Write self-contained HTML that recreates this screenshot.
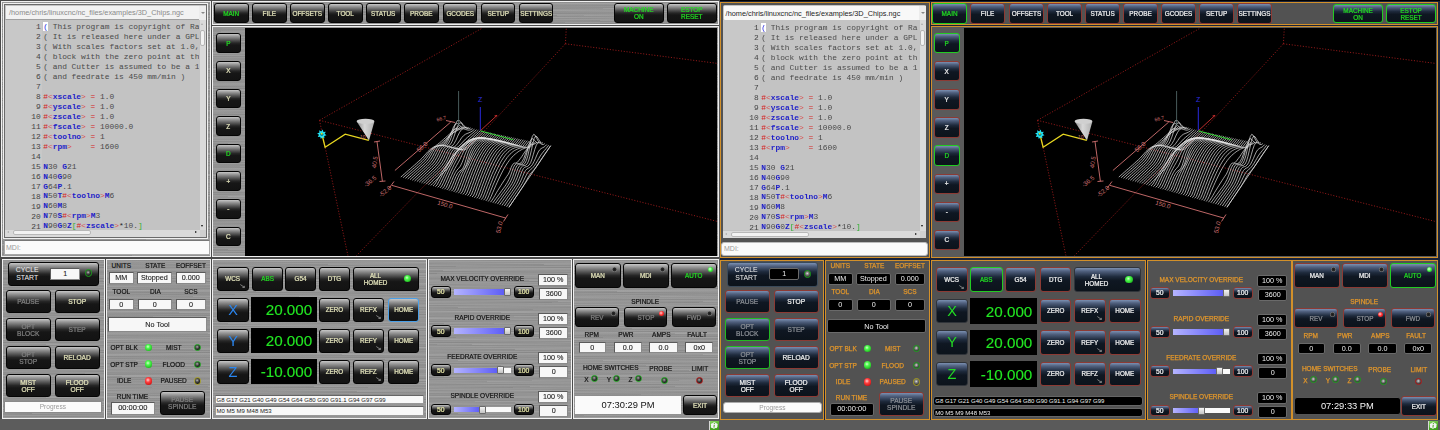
<!DOCTYPE html><html><head><meta charset="utf-8"><style>
html,body{margin:0;padding:0;}
body{width:1440px;height:430px;overflow:hidden;position:relative;background:#000;font-family:"Liberation Sans",sans-serif;}
.a{position:absolute;box-sizing:border-box;}
.t{white-space:nowrap;display:flex;align-items:center;line-height:1.15;}
.metal{background-color:#979797;background-image:repeating-linear-gradient(179.6deg,rgba(255,255,255,0.09) 0px,rgba(0,0,0,0.06) 1px,rgba(255,255,255,0.03) 2px,rgba(0,0,0,0.07) 3.2px,rgba(255,255,255,0.07) 4.1px,rgba(0,0,0,0.03) 5.3px),repeating-linear-gradient(180.3deg,rgba(0,0,0,0.05) 0px,rgba(255,255,255,0.06) 2.3px,rgba(0,0,0,0.04) 4.7px,rgba(255,255,255,0.02) 7.1px);}
.bL{border:1px solid #050505;border-radius:3px;background:linear-gradient(180deg,#c8c8c8 0%,#9c9c9c 12%,#5c5c5c 32%,#262626 50%,#161616 62%,#131313 100%);color:#e4e4bc;font-weight:normal;-webkit-text-stroke:0.22px;}
.bR{border:1px solid #8c3a34;border-radius:3px;background:linear-gradient(180deg,#7b90b2 0%,#50607e 14%,#1e2a3c 38%,#0f1722 55%,#0c131b 100%);color:#f2f2f2;font-weight:normal;-webkit-text-stroke:0.22px;}
.bt{will-change:transform;position:absolute;left:0;right:0;top:calc(50% + 0.6px);transform:translateY(-50%);text-align:center;line-height:1.12;white-space:nowrap;}
.sled{position:absolute;right:2.5px;top:2.5px;width:5px;height:5px;border-radius:50%;}
.arr{position:absolute;right:2.5px;bottom:2px;}
.box{background:#f7f7f7;border:1px solid #8a8a8a;border-top-color:#5a5a5a;border-left-color:#5a5a5a;color:#1a1a1a;-webkit-text-stroke:0.1px #1a1a1a;font-size:7.2px;text-align:center;}
.boxR{background:#000;border:1px solid #6a6a6a;border-radius:2px;color:#f0f0f0;font-size:7.2px;text-align:center;}
.lbl{font-size:6.5px;color:#141414;font-weight:normal;-webkit-text-stroke:0.2px #141414;}
.lblR{font-size:6.5px;color:#e0962c;font-weight:normal;-webkit-text-stroke:0.25px #e0962c;}
.code{font-family:"Liberation Mono",monospace;font-size:7.9px;line-height:9.97px;white-space:pre;}
.led{position:absolute;border-radius:50%;box-sizing:border-box;}
</style></head><body>

<div class="a " style="left:0.00px;top:0.00px;width:720.00px;height:430.00px;background:#5c5c5c;"></div>
<div class="a " style="left:0.00px;top:0.00px;width:719.50px;height:419.00px;background:#4a4a4a;"></div>
<div class="a metal" style="left:1.00px;top:1.00px;width:209.80px;height:255.80px;border:1px solid #f0f0f0;"></div>
<div class="a " style="left:3.00px;top:3.00px;width:205.30px;height:235.50px;border:1px solid #f0f0f0;background:#6a6a6a;"></div>
<div class="a metal" style="left:212.30px;top:1.00px;width:506.50px;height:23.60px;border:1px solid #f0f0f0;"></div>
<div class="a metal" style="left:212.30px;top:26.20px;width:506.50px;height:230.80px;border:1px solid #f0f0f0;"></div>
<div class="a metal" style="left:1.50px;top:259.20px;width:103.30px;height:159.50px;border:1px solid #f0f0f0;"></div>
<div class="a metal" style="left:105.80px;top:259.20px;width:105.00px;height:159.50px;border:1px solid #f0f0f0;"></div>
<div class="a metal" style="left:212.30px;top:259.20px;width:214.50px;height:159.50px;border:1px solid #f0f0f0;"></div>
<div class="a metal" style="left:427.60px;top:259.20px;width:144.30px;height:159.50px;border:1px solid #f0f0f0;"></div>
<div class="a metal" style="left:572.80px;top:259.20px;width:146.00px;height:159.50px;border:1px solid #f0f0f0;"></div>
<div class="a " style="left:4.80px;top:4.80px;width:201.20px;height:15.20px;background:#f2f2f2;border:1px solid #c4c4c4;border-bottom-color:#a0a0a0;"></div>
<div class="a t " style="left:9.00px;top:-1.70px;width:400px;height:30px;justify-content:flex-start;font-size:7.33px;color:#8a8a8a;">/home/chris/linuxcnc/nc_files/examples/3D_Chips.ngc</div>
<div class="a " style="left:198.50px;top:5.50px;width:7.00px;height:14.00px;background:#ececec;"></div>
<div class="a" style="left:200.80px;top:11.5px;width:0;height:0;border-left:2.2px solid transparent;border-right:2.2px solid transparent;border-top:2.6px solid #888;"></div>
<div class="a " style="left:5.00px;top:20.00px;width:201.00px;height:216.50px;background:#c3c3c3;"></div>
<div class="a " style="left:5.00px;top:20.00px;width:37.30px;height:209.50px;background:#c8c8c8;"></div>
<div class="a t " style="left:-259.20px;top:12.00px;width:300px;height:30px;justify-content:flex-end;text-align:right;font-family:'Liberation Mono',monospace;font-size:7.9px;color:#444;">1</div>
<div class="a code" style="left:43.20px;top:22.00px;width:156.30px;height:11px;overflow:hidden;"><span style="color:#1a1adc;background:#fff;">(</span><span style="color:#4a4a4a;"> This program is copyright of Ra</span></div>
<div class="a t " style="left:-259.20px;top:21.97px;width:300px;height:30px;justify-content:flex-end;text-align:right;font-family:'Liberation Mono',monospace;font-size:7.9px;color:#444;">2</div>
<div class="a code" style="left:43.20px;top:31.97px;width:156.30px;height:11px;overflow:hidden;"><span style="color:#4a4a4a;">( It is released here under a GPL</span></div>
<div class="a t " style="left:-259.20px;top:31.94px;width:300px;height:30px;justify-content:flex-end;text-align:right;font-family:'Liberation Mono',monospace;font-size:7.9px;color:#444;">3</div>
<div class="a code" style="left:43.20px;top:41.94px;width:156.30px;height:11px;overflow:hidden;"><span style="color:#4a4a4a;">( With scales factors set at 1.0,</span></div>
<div class="a t " style="left:-259.20px;top:41.91px;width:300px;height:30px;justify-content:flex-end;text-align:right;font-family:'Liberation Mono',monospace;font-size:7.9px;color:#444;">4</div>
<div class="a code" style="left:43.20px;top:51.91px;width:156.30px;height:11px;overflow:hidden;"><span style="color:#4a4a4a;">( block with the zero point at th</span></div>
<div class="a t " style="left:-259.20px;top:51.88px;width:300px;height:30px;justify-content:flex-end;text-align:right;font-family:'Liberation Mono',monospace;font-size:7.9px;color:#444;">5</div>
<div class="a code" style="left:43.20px;top:61.88px;width:156.30px;height:11px;overflow:hidden;"><span style="color:#4a4a4a;">( and Cutter is assumed to be a 1</span></div>
<div class="a t " style="left:-259.20px;top:61.85px;width:300px;height:30px;justify-content:flex-end;text-align:right;font-family:'Liberation Mono',monospace;font-size:7.9px;color:#444;">6</div>
<div class="a code" style="left:43.20px;top:71.85px;width:156.30px;height:11px;overflow:hidden;"><span style="color:#4a4a4a;">( and feedrate is 450 mm/min )</span></div>
<div class="a t " style="left:-259.20px;top:71.82px;width:300px;height:30px;justify-content:flex-end;text-align:right;font-family:'Liberation Mono',monospace;font-size:7.9px;color:#444;">7</div>
<div class="a t " style="left:-259.20px;top:81.79px;width:300px;height:30px;justify-content:flex-end;text-align:right;font-family:'Liberation Mono',monospace;font-size:7.9px;color:#444;">8</div>
<div class="a code" style="left:43.20px;top:91.79px;width:156.30px;height:11px;overflow:hidden;"><span style="color:#d42020;">#</span><span style="color:#d85050;">&lt;</span><span style="color:#1e1ec8;font-weight:bold;">xscale</span><span style="color:#d85050;">&gt;</span><span style="color:#4a4a4a;"> </span><span style="color:#d42020;">=</span><span style="color:#4a4a4a;"> 1.0</span></div>
<div class="a t " style="left:-259.20px;top:91.76px;width:300px;height:30px;justify-content:flex-end;text-align:right;font-family:'Liberation Mono',monospace;font-size:7.9px;color:#444;">9</div>
<div class="a code" style="left:43.20px;top:101.76px;width:156.30px;height:11px;overflow:hidden;"><span style="color:#d42020;">#</span><span style="color:#d85050;">&lt;</span><span style="color:#1e1ec8;font-weight:bold;">yscale</span><span style="color:#d85050;">&gt;</span><span style="color:#4a4a4a;"> </span><span style="color:#d42020;">=</span><span style="color:#4a4a4a;"> 1.0</span></div>
<div class="a t " style="left:-259.20px;top:101.73px;width:300px;height:30px;justify-content:flex-end;text-align:right;font-family:'Liberation Mono',monospace;font-size:7.9px;color:#444;">10</div>
<div class="a code" style="left:43.20px;top:111.73px;width:156.30px;height:11px;overflow:hidden;"><span style="color:#d42020;">#</span><span style="color:#d85050;">&lt;</span><span style="color:#1e1ec8;font-weight:bold;">zscale</span><span style="color:#d85050;">&gt;</span><span style="color:#4a4a4a;"> </span><span style="color:#d42020;">=</span><span style="color:#4a4a4a;"> 1.0</span></div>
<div class="a t " style="left:-259.20px;top:111.70px;width:300px;height:30px;justify-content:flex-end;text-align:right;font-family:'Liberation Mono',monospace;font-size:7.9px;color:#444;">11</div>
<div class="a code" style="left:43.20px;top:121.70px;width:156.30px;height:11px;overflow:hidden;"><span style="color:#d42020;">#</span><span style="color:#d85050;">&lt;</span><span style="color:#1e1ec8;font-weight:bold;">fscale</span><span style="color:#d85050;">&gt;</span><span style="color:#4a4a4a;"> </span><span style="color:#d42020;">=</span><span style="color:#4a4a4a;"> 10000.0</span></div>
<div class="a t " style="left:-259.20px;top:121.67px;width:300px;height:30px;justify-content:flex-end;text-align:right;font-family:'Liberation Mono',monospace;font-size:7.9px;color:#444;">12</div>
<div class="a code" style="left:43.20px;top:131.67px;width:156.30px;height:11px;overflow:hidden;"><span style="color:#d42020;">#</span><span style="color:#d85050;">&lt;</span><span style="color:#1e1ec8;font-weight:bold;">toolno</span><span style="color:#d85050;">&gt;</span><span style="color:#4a4a4a;"> </span><span style="color:#d42020;">=</span><span style="color:#4a4a4a;"> 1</span></div>
<div class="a t " style="left:-259.20px;top:131.64px;width:300px;height:30px;justify-content:flex-end;text-align:right;font-family:'Liberation Mono',monospace;font-size:7.9px;color:#444;">13</div>
<div class="a code" style="left:43.20px;top:141.64px;width:156.30px;height:11px;overflow:hidden;"><span style="color:#d42020;">#</span><span style="color:#d85050;">&lt;</span><span style="color:#1e1ec8;font-weight:bold;">rpm</span><span style="color:#d85050;">&gt;</span><span style="color:#4a4a4a;">    </span><span style="color:#d42020;">=</span><span style="color:#4a4a4a;"> 1600</span></div>
<div class="a t " style="left:-259.20px;top:141.61px;width:300px;height:30px;justify-content:flex-end;text-align:right;font-family:'Liberation Mono',monospace;font-size:7.9px;color:#444;">14</div>
<div class="a t " style="left:-259.20px;top:151.58px;width:300px;height:30px;justify-content:flex-end;text-align:right;font-family:'Liberation Mono',monospace;font-size:7.9px;color:#444;">15</div>
<div class="a code" style="left:43.20px;top:161.58px;width:156.30px;height:11px;overflow:hidden;"><span style="color:#1e1ec8;font-weight:bold;">N</span><span style="color:#4a4a4a;">30 </span><span style="color:#1e1ec8;font-weight:bold;">G</span><span style="color:#4a4a4a;">21</span></div>
<div class="a t " style="left:-259.20px;top:161.55px;width:300px;height:30px;justify-content:flex-end;text-align:right;font-family:'Liberation Mono',monospace;font-size:7.9px;color:#444;">16</div>
<div class="a code" style="left:43.20px;top:171.55px;width:156.30px;height:11px;overflow:hidden;"><span style="color:#1e1ec8;font-weight:bold;">N</span><span style="color:#4a4a4a;">40</span><span style="color:#1e1ec8;font-weight:bold;">G</span><span style="color:#4a4a4a;">90</span></div>
<div class="a t " style="left:-259.20px;top:171.52px;width:300px;height:30px;justify-content:flex-end;text-align:right;font-family:'Liberation Mono',monospace;font-size:7.9px;color:#444;">17</div>
<div class="a code" style="left:43.20px;top:181.52px;width:156.30px;height:11px;overflow:hidden;"><span style="color:#1e1ec8;font-weight:bold;">G</span><span style="color:#4a4a4a;">64</span><span style="color:#1e1ec8;font-weight:bold;">P</span><span style="color:#4a4a4a;">.1</span></div>
<div class="a t " style="left:-259.20px;top:181.49px;width:300px;height:30px;justify-content:flex-end;text-align:right;font-family:'Liberation Mono',monospace;font-size:7.9px;color:#444;">18</div>
<div class="a code" style="left:43.20px;top:191.49px;width:156.30px;height:11px;overflow:hidden;"><span style="color:#1e1ec8;font-weight:bold;">N</span><span style="color:#4a4a4a;">50</span><span style="color:#1e1ec8;font-weight:bold;">T</span><span style="color:#d42020;">#</span><span style="color:#d85050;">&lt;</span><span style="color:#1e1ec8;font-weight:bold;">toolno</span><span style="color:#d85050;">&gt;</span><span style="color:#1e1ec8;font-weight:bold;">M</span><span style="color:#4a4a4a;">6</span></div>
<div class="a t " style="left:-259.20px;top:191.46px;width:300px;height:30px;justify-content:flex-end;text-align:right;font-family:'Liberation Mono',monospace;font-size:7.9px;color:#444;">19</div>
<div class="a code" style="left:43.20px;top:201.46px;width:156.30px;height:11px;overflow:hidden;"><span style="color:#1e1ec8;font-weight:bold;">N</span><span style="color:#4a4a4a;">60</span><span style="color:#1e1ec8;font-weight:bold;">M</span><span style="color:#4a4a4a;">8</span></div>
<div class="a t " style="left:-259.20px;top:201.43px;width:300px;height:30px;justify-content:flex-end;text-align:right;font-family:'Liberation Mono',monospace;font-size:7.9px;color:#444;">20</div>
<div class="a code" style="left:43.20px;top:211.43px;width:156.30px;height:11px;overflow:hidden;"><span style="color:#1e1ec8;font-weight:bold;">N</span><span style="color:#4a4a4a;">70</span><span style="color:#1e1ec8;font-weight:bold;">S</span><span style="color:#d42020;">#</span><span style="color:#d85050;">&lt;</span><span style="color:#1e1ec8;font-weight:bold;">rpm</span><span style="color:#d85050;">&gt;</span><span style="color:#1e1ec8;font-weight:bold;">M</span><span style="color:#4a4a4a;">3</span></div>
<div class="a t " style="left:-259.20px;top:211.40px;width:300px;height:30px;justify-content:flex-end;text-align:right;font-family:'Liberation Mono',monospace;font-size:7.9px;color:#444;">21</div>
<div class="a code" style="left:43.20px;top:221.40px;width:156.30px;height:11px;overflow:hidden;"><span style="color:#1e1ec8;font-weight:bold;">N</span><span style="color:#4a4a4a;">90</span><span style="color:#1e1ec8;font-weight:bold;">G</span><span style="color:#4a4a4a;">0</span><span style="color:#1e1ec8;font-weight:bold;">Z</span><span style="color:#30b030;">[</span><span style="color:#d42020;">#</span><span style="color:#d85050;">&lt;</span><span style="color:#1e1ec8;font-weight:bold;">zscale</span><span style="color:#d85050;">&gt;</span><span style="color:#222;">*</span><span style="color:#4a4a4a;">10.</span><span style="color:#30b030;">]</span></div>
<div class="a " style="left:199.50px;top:20.00px;width:6.50px;height:209.50px;background:#dadada;"></div>
<div class="a " style="left:200.30px;top:30.00px;width:4.90px;height:15.50px;background:#f2f2f2;border:1px solid #b4b4b4;border-radius:2px;"></div>
<div class="a" style="left:201.00px;top:22.5px;width:0;height:0;border-left:1.8px solid transparent;border-right:1.8px solid transparent;border-bottom:2.2px solid #aaa;"></div>
<div class="a" style="left:201.00px;top:225px;width:0;height:0;border-left:1.8px solid transparent;border-right:1.8px solid transparent;border-top:2.4px solid #111;"></div>
<div class="a " style="left:5.00px;top:229.50px;width:194.50px;height:7.00px;background:#dadada;"></div>
<div class="a " style="left:12.50px;top:230.30px;width:78.50px;height:5.20px;background:#f2f2f2;border:1px solid #b8b8b8;border-radius:2px;"></div>
<div class="a" style="left:7.00px;top:231.2px;width:0;height:0;border-top:1.8px solid transparent;border-bottom:1.8px solid transparent;border-right:2.2px solid #aaa;"></div>
<div class="a" style="left:195.00px;top:231.2px;width:0;height:0;border-top:1.8px solid transparent;border-bottom:1.8px solid transparent;border-left:2.6px solid #111;"></div>
<div class="a " style="left:199.50px;top:229.50px;width:6.50px;height:7.00px;background:#cfcfcf;"></div>
<div class="a " style="left:3.50px;top:240.40px;width:206.00px;height:15.00px;background:#fbfbfb;border:1px solid #a8a8a8;border-top-color:#777;"></div>
<div class="a t " style="left:6.00px;top:233.30px;width:400px;height:30px;justify-content:flex-start;font-size:7px;color:#9a9a9a;">MDI:</div>
<div class="a bL" style="left:214.20px;top:3.30px;width:34.50px;height:19.30px;color:#22dd22;font-size:6.4px;"><div class="bt">MAIN</div></div>
<div class="a bL" style="left:252.25px;top:3.30px;width:34.50px;height:19.30px;font-size:6.4px;"><div class="bt">FILE</div></div>
<div class="a bL" style="left:290.30px;top:3.30px;width:34.50px;height:19.30px;font-size:6.4px;"><div class="bt">OFFSETS</div></div>
<div class="a bL" style="left:328.35px;top:3.30px;width:34.50px;height:19.30px;font-size:6.4px;"><div class="bt">TOOL</div></div>
<div class="a bL" style="left:366.40px;top:3.30px;width:34.50px;height:19.30px;font-size:6.4px;"><div class="bt">STATUS</div></div>
<div class="a bL" style="left:404.45px;top:3.30px;width:34.50px;height:19.30px;font-size:6.4px;"><div class="bt">PROBE</div></div>
<div class="a bL" style="left:442.50px;top:3.30px;width:34.50px;height:19.30px;font-size:6.4px;"><div class="bt">GCODES</div></div>
<div class="a bL" style="left:480.55px;top:3.30px;width:34.50px;height:19.30px;font-size:6.4px;"><div class="bt">SETUP</div></div>
<div class="a bL" style="left:518.60px;top:3.30px;width:34.50px;height:19.30px;font-size:6.4px;"><div class="bt">SETTINGS</div></div>
<div class="a bL" style="left:614.30px;top:3.10px;width:49.50px;height:19.60px;color:#22dd22;font-size:6.4px;"><div class="bt">MACHINE<br>ON</div></div>
<div class="a bL" style="left:667.20px;top:3.10px;width:49.50px;height:19.60px;color:#22dd22;font-size:6.4px;"><div class="bt">ESTOP<br>RESET</div></div>
<div class="a " style="left:245.00px;top:27.50px;width:472.30px;height:228.00px;background:#000;"></div>
<svg class="a" style="left:245.00px;top:27.5px;" width="472.3" height="228" viewBox="245 27.5 472.3 228"><line x1="319.5" y1="119.8" x2="482.4" y2="27.5" stroke="#a01c1c" stroke-width="0.9" stroke-dasharray="1.1 1.7" fill="none"/><line x1="319.5" y1="119.8" x2="716.7" y2="220.8" stroke="#a01c1c" stroke-width="0.9" stroke-dasharray="1.1 1.7" fill="none"/><line x1="319.5" y1="119.8" x2="347.9" y2="255" stroke="#a01c1c" stroke-width="0.9" stroke-dasharray="1.1 1.7" fill="none"/><line x1="565.4" y1="43.3" x2="566.3" y2="27.5" stroke="#a01c1c" stroke-width="0.9" stroke-dasharray="1.1 1.7" fill="none"/><line x1="565.4" y1="43.3" x2="716.7" y2="62.8" stroke="#a01c1c" stroke-width="0.9" stroke-dasharray="1.1 1.7" fill="none"/><polyline points="565.4,43.3 482.3,132.8 424.6,184.9 356.6,255" stroke="#a01c1c" stroke-width="0.9" stroke-dasharray="1.1 1.7" fill="none"/><polyline points="400.8,176.6 402.7,174.9 404.7,173.2 406.6,171.5 408.5,169.8 410.5,168.1 412.4,166.4 414.4,164.7 416.3,163.0 418.2,161.2 420.2,159.5 422.1,157.6 424.0,155.5 426.0,153.3 427.9,151.1 429.9,149.2 431.8,147.7 433.7,146.5 435.7,145.3 437.6,143.9 439.5,142.4 441.5,140.7 443.4,139.0 445.3,137.3 447.3,135.6 449.2,133.9 451.2,132.2 453.1,130.5 455.0,128.9 457.0,127.2 458.9,125.5" stroke="#e6e6e6" stroke-width="0.7" fill="none"/><polyline points="403.1,177.2 405.0,175.5 407.0,173.8 408.9,172.1 410.8,170.4 412.7,168.7 414.7,167.0 416.6,165.3 418.5,163.5 420.4,161.8 422.4,159.9 424.3,157.9 426.2,155.5 428.1,152.9 430.1,150.3 432.0,148.3 433.9,146.9 435.8,146.0 437.8,145.2 439.7,144.1 441.6,142.6 443.5,140.9 445.5,139.1 447.4,137.2 449.3,135.4 451.2,133.8 453.2,132.2 455.1,130.7 457.0,129.2 458.9,127.6 460.9,125.9" stroke="#e6e6e6" stroke-width="0.7" fill="none"/><polyline points="405.4,177.9 407.3,176.2 409.2,174.4 411.1,172.7 413.1,171.0 415.0,169.3 416.9,167.6 418.8,165.9 420.7,164.1 422.6,162.3 424.5,160.4 426.4,158.1 428.4,155.4 430.3,152.4 432.2,149.4 434.1,147.1 436.0,145.9 437.9,145.4 439.8,145.0 441.8,144.1 443.7,142.5 445.6,140.4 447.5,138.0 449.4,135.7 451.3,133.7 453.2,132.3 455.2,131.2 457.1,130.2 459.0,129.1 460.9,127.8 462.8,126.2" stroke="#e6e6e6" stroke-width="0.7" fill="none"/><polyline points="407.7,178.5 409.6,176.8 411.5,175.1 413.4,173.4 415.3,171.6 417.2,169.9 419.1,168.2 421.0,166.4 422.9,164.7 424.8,162.9 426.7,160.9 428.6,158.5 430.5,155.5 432.4,152.0 434.3,148.7 436.2,146.3 438.1,145.2 440.0,145.0 441.9,144.8 443.8,143.9 445.7,141.9 447.6,138.8 449.5,135.2 451.4,131.8 453.3,129.4 455.2,128.4 457.2,128.3 459.1,128.6 461.0,128.4 462.9,127.7 464.8,126.5" stroke="#e6e6e6" stroke-width="0.7" fill="none"/><polyline points="410.0,179.2 411.9,177.4 413.8,175.7 415.7,174.0 417.6,172.2 419.5,170.5 421.3,168.8 423.2,167.0 425.1,165.3 427.0,163.4 428.9,161.4 430.8,158.9 432.7,155.7 434.6,152.0 436.5,148.5 438.4,146.0 440.2,145.0 442.1,144.9 444.0,144.8 445.9,143.6 447.8,140.8 449.7,136.5 451.6,131.3 453.5,126.5 455.4,123.5 457.3,123.0 459.2,124.4 461.0,126.2 462.9,127.4 464.8,127.5 466.7,126.7" stroke="#e6e6e6" stroke-width="0.7" fill="none"/><polyline points="412.3,179.8 414.2,178.1 416.1,176.3 417.9,174.6 419.8,172.9 421.7,171.1 423.6,169.4 425.5,167.6 427.3,165.9 429.2,164.0 431.1,161.9 433.0,159.4 434.8,156.1 436.7,152.3 438.6,148.6 440.5,146.1 442.4,145.1 444.2,145.1 446.1,145.0 448.0,143.6 449.9,140.4 451.8,135.3 453.6,129.1 455.5,123.4 457.4,120.1 459.3,120.0 461.2,122.2 463.0,125.0 464.9,127.0 466.8,127.5 468.7,126.9" stroke="#e6e6e6" stroke-width="0.7" fill="none"/><polyline points="414.6,180.5 416.5,178.7 418.3,177.0 420.2,175.2 422.1,173.5 423.9,171.7 425.8,170.0 427.7,168.2 429.5,166.4 431.4,164.6 433.3,162.5 435.1,159.9 437.0,156.6 438.9,152.7 440.7,149.0 442.6,146.4 444.5,145.4 446.3,145.5 448.2,145.5 450.1,144.3 451.9,141.4 453.8,136.7 455.7,131.0 457.5,125.7 459.4,122.6 461.3,122.3 463.1,124.0 465.0,126.3 466.9,127.9 468.8,128.2 470.6,127.4" stroke="#e6e6e6" stroke-width="0.7" fill="none"/><polyline points="416.9,181.1 418.8,179.3 420.6,177.6 422.5,175.8 424.3,174.1 426.2,172.3 428.0,170.6 429.9,168.8 431.7,167.0 433.6,165.2 435.5,163.1 437.3,160.4 439.2,157.1 441.0,153.2 442.9,149.4 444.7,146.8 446.6,145.9 448.4,146.1 450.3,146.2 452.2,145.4 454.0,143.2 455.9,139.8 457.7,135.6 459.6,131.8 461.4,129.2 463.3,128.3 465.1,128.7 467.0,129.4 468.9,129.7 470.7,129.2 472.6,128.1" stroke="#e6e6e6" stroke-width="0.7" fill="none"/><polyline points="419.2,181.7 421.0,180.0 422.9,178.2 424.7,176.5 426.6,174.7 428.4,172.9 430.3,171.2 432.1,169.4 434.0,167.6 435.8,165.7 437.6,163.6 439.5,161.0 441.3,157.7 443.2,153.7 445.0,149.9 446.9,147.3 448.7,146.4 450.6,146.6 452.4,146.9 454.2,146.5 456.1,145.0 457.9,142.7 459.8,140.0 461.6,137.3 463.5,135.2 465.3,133.8 467.1,133.0 469.0,132.3 470.8,131.4 472.7,130.2 474.5,128.7" stroke="#e6e6e6" stroke-width="0.7" fill="none"/><polyline points="421.5,182.4 423.3,180.6 425.2,178.8 427.0,177.1 428.8,175.3 430.7,173.5 432.5,171.8 434.3,170.0 436.2,168.2 438.0,166.3 439.8,164.2 441.7,161.6 443.5,158.2 445.3,154.2 447.2,150.5 449.0,147.8 450.8,146.9 452.7,147.2 454.5,147.5 456.3,147.3 458.2,146.2 460.0,144.5 461.8,142.5 463.7,140.5 465.5,138.6 467.3,137.0 469.1,135.5 471.0,134.0 472.8,132.5 474.6,130.9 476.5,129.2" stroke="#e6e6e6" stroke-width="0.7" fill="none"/><polyline points="423.8,183.0 425.6,181.2 427.4,179.5 429.3,177.7 431.1,175.9 432.9,174.1 434.7,172.4 436.5,170.6 438.4,168.8 440.2,166.9 442.0,164.8 443.8,162.1 445.7,158.8 447.5,154.8 449.3,151.0 451.1,148.4 452.9,147.4 454.8,147.7 456.6,148.1 458.4,147.9 460.2,146.9 462.0,145.4 463.9,143.7 465.7,141.9 467.5,140.1 469.3,138.3 471.1,136.6 473.0,134.9 474.8,133.2 476.6,131.4 478.4,129.7" stroke="#e6e6e6" stroke-width="0.7" fill="none"/><polyline points="426.1,183.7 427.9,181.9 429.7,180.1 431.5,178.3 433.3,176.5 435.1,174.7 437.0,173.0 438.8,171.2 440.6,169.4 442.4,167.5 444.2,165.3 446.0,162.7 447.8,159.3 449.6,155.3 451.4,151.5 453.2,148.9 455.1,147.9 456.9,148.2 458.7,148.6 460.5,148.4 462.3,147.5 464.1,146.0 465.9,144.3 467.7,142.6 469.5,140.8 471.3,139.0 473.1,137.2 475.0,135.4 476.8,133.7 478.6,131.9 480.4,130.1" stroke="#e6e6e6" stroke-width="0.7" fill="none"/><polyline points="428.4,184.3 430.2,182.5 432.0,180.7 433.8,178.9 435.6,177.1 437.4,175.3 439.2,173.6 441.0,171.8 442.8,169.9 444.6,168.0 446.4,165.9 448.2,163.2 450.0,159.9 451.8,155.9 453.6,152.1 455.4,149.4 457.2,148.5 459.0,148.7 460.8,149.1 462.6,148.9 464.4,148.0 466.2,146.5 468.0,144.8 469.8,143.1 471.6,141.3 473.3,139.5 475.1,137.7 476.9,135.9 478.7,134.1 480.5,132.3 482.3,130.5" stroke="#e6e6e6" stroke-width="0.7" fill="none"/><polyline points="430.7,185.0 432.5,183.2 434.3,181.4 436.1,179.6 437.8,177.8 439.6,176.0 441.4,174.2 443.2,172.3 445.0,170.5 446.8,168.6 448.6,166.5 450.4,163.8 452.1,160.4 453.9,156.4 455.7,152.6 457.5,150.0 459.3,149.0 461.1,149.2 462.9,149.6 464.6,149.4 466.4,148.5 468.2,147.0 470.0,145.3 471.8,143.5 473.6,141.7 475.4,139.9 477.1,138.1 478.9,136.3 480.7,134.5 482.5,132.7 484.3,130.9" stroke="#e6e6e6" stroke-width="0.7" fill="none"/><polyline points="433.0,185.6 434.8,183.8 436.5,181.0 438.3,177.9 440.1,174.9 441.9,172.0 443.6,169.1 445.4,166.3 447.2,163.6 449.0,161.0 450.7,158.5 452.5,156.2 454.3,154.0 456.1,151.9 457.8,150.0 459.6,148.3 461.4,146.7 463.2,145.2 464.9,143.9 466.7,142.7 468.5,141.7 470.3,140.8 472.0,139.9 473.8,139.2 475.6,138.5 477.4,137.9 479.1,137.3 480.9,136.8 482.7,135.0 484.5,133.2 486.2,131.4" stroke="#e6e6e6" stroke-width="0.7" fill="none"/><polyline points="435.3,186.2 437.1,184.4 438.8,181.2 440.6,177.7 442.4,174.3 444.1,170.9 445.9,167.6 447.6,164.4 449.4,161.3 451.2,158.4 452.9,155.7 454.7,153.1 456.5,150.8 458.2,148.7 460.0,146.7 461.7,145.0 463.5,143.5 465.3,142.1 467.0,141.0 468.8,140.1 470.6,139.3 472.3,138.7 474.1,138.2 475.9,137.9 477.6,137.6 479.4,137.5 481.1,137.3 482.9,137.2 484.7,135.4 486.4,133.6 488.2,131.8" stroke="#e6e6e6" stroke-width="0.7" fill="none"/><polyline points="437.6,186.9 439.4,185.1 441.1,181.7 442.9,177.9 444.6,174.2 446.4,170.6 448.1,167.1 449.9,163.7 451.6,160.5 453.4,157.5 455.1,154.6 456.9,151.9 458.6,149.5 460.4,147.3 462.1,145.3 463.9,143.6 465.6,142.1 467.4,140.9 469.1,139.8 470.9,139.0 472.6,138.4 474.4,137.9 476.1,137.6 477.9,137.5 479.6,137.4 481.4,137.5 483.1,137.6 484.9,137.7 486.6,135.9 488.4,134.0 490.2,132.2" stroke="#e6e6e6" stroke-width="0.7" fill="none"/><polyline points="439.9,187.5 441.6,185.7 443.4,182.2 445.1,178.3 446.9,174.4 448.6,170.7 450.3,167.0 452.1,163.5 453.8,160.2 455.6,157.0 457.3,154.1 459.0,151.3 460.8,148.8 462.5,146.6 464.3,144.6 466.0,142.9 467.7,141.4 469.5,140.2 471.2,139.2 473.0,138.4 474.7,137.9 476.4,137.6 478.2,137.4 479.9,137.3 481.7,137.4 483.4,137.6 485.1,137.8 486.9,138.1 488.6,136.3 490.4,134.5 492.1,132.6" stroke="#e6e6e6" stroke-width="0.7" fill="none"/><polyline points="442.2,188.2 443.9,186.3 445.7,182.7 447.4,178.7 449.1,174.7 450.8,170.9 452.6,167.3 454.3,163.8 456.0,160.5 457.8,157.2 459.5,154.1 461.2,151.1 462.9,148.5 464.7,146.2 466.4,144.2 468.1,142.5 469.9,141.0 471.6,139.8 473.3,138.9 475.0,138.2 476.8,137.7 478.5,137.4 480.2,137.3 482.0,137.4 483.7,137.6 485.4,137.8 487.1,138.2 488.9,138.6 490.6,136.7 492.3,134.9 494.1,133.0" stroke="#e6e6e6" stroke-width="0.7" fill="none"/><polyline points="444.5,188.8 446.2,187.0 447.9,183.3 449.7,179.2 451.4,175.2 453.1,171.4 454.8,168.1 456.5,165.1 458.2,162.2 460.0,158.8 461.7,155.1 463.4,151.5 465.1,148.5 466.8,146.1 468.5,144.0 470.3,142.3 472.0,140.8 473.7,139.6 475.4,138.7 477.1,138.1 478.8,137.6 480.6,137.4 482.3,137.4 484.0,137.5 485.7,137.8 487.4,138.1 489.1,138.5 490.9,139.0 492.6,137.2 494.3,135.3 496.0,133.5" stroke="#e6e6e6" stroke-width="0.7" fill="none"/><polyline points="446.8,189.5 448.5,187.6 450.2,183.8 451.9,179.7 453.6,175.7 455.3,172.2 457.0,169.6 458.7,167.7 460.4,165.6 462.1,162.0 463.9,157.3 465.6,152.6 467.3,148.9 469.0,146.1 470.7,144.0 472.4,142.2 474.1,140.8 475.8,139.6 477.5,138.7 479.2,138.1 480.9,137.7 482.6,137.5 484.3,137.5 486.0,137.7 487.7,138.0 489.4,138.4 491.1,138.9 492.8,139.4 494.6,137.6 496.3,135.7 498.0,133.9" stroke="#e6e6e6" stroke-width="0.7" fill="none"/><polyline points="449.1,190.1 450.8,188.2 452.5,184.4 454.2,180.2 455.9,176.2 457.6,172.9 459.3,170.8 461.0,169.7 462.7,168.2 464.3,164.6 466.0,159.0 467.7,153.5 469.4,149.3 471.1,146.3 472.8,144.1 474.5,142.3 476.2,140.9 477.9,139.7 479.6,138.8 481.3,138.2 483.0,137.8 484.7,137.7 486.4,137.7 488.1,138.0 489.8,138.3 491.4,138.8 493.1,139.3 494.8,139.9 496.5,138.0 498.2,136.2 499.9,134.3" stroke="#e6e6e6" stroke-width="0.7" fill="none"/><polyline points="451.4,190.7 453.1,188.9 454.8,185.0 456.4,180.7 458.1,176.7 459.8,173.2 461.5,170.7 463.2,169.1 464.9,167.1 466.5,163.5 468.2,158.4 469.9,153.3 471.6,149.3 473.3,146.4 475.0,144.3 476.6,142.5 478.3,141.0 480.0,139.9 481.7,139.0 483.4,138.4 485.0,138.1 486.7,137.9 488.4,138.0 490.1,138.3 491.8,138.6 493.5,139.1 495.1,139.7 496.8,140.3 498.5,138.5 500.2,136.6 501.9,134.7" stroke="#e6e6e6" stroke-width="0.7" fill="none"/><polyline points="453.7,191.4 455.4,189.5 457.0,185.6 458.7,181.3 460.4,177.1 462.1,173.2 463.7,169.9 465.4,167.0 467.1,164.1 468.7,160.6 470.4,156.5 472.1,152.5 473.7,149.2 475.4,146.6 477.1,144.5 478.8,142.8 480.4,141.3 482.1,140.2 483.8,139.3 485.4,138.7 487.1,138.4 488.8,138.2 490.5,138.3 492.1,138.6 493.8,139.0 495.5,139.5 497.1,140.1 498.8,140.8 500.5,138.9 502.2,137.0 503.8,135.1" stroke="#e6e6e6" stroke-width="0.7" fill="none"/><polyline points="456.0,192.0 457.7,190.1 459.3,186.2 461.0,181.9 462.6,177.6 464.3,173.4 466.0,169.5 467.6,165.9 469.3,162.4 470.9,158.9 472.6,155.4 474.3,152.2 475.9,149.4 477.6,146.9 479.2,144.9 480.9,143.1 482.5,141.6 484.2,140.5 485.9,139.6 487.5,139.0 489.2,138.7 490.8,138.6 492.5,138.7 494.2,139.0 495.8,139.4 497.5,139.9 499.1,140.6 500.8,141.2 502.5,139.3 504.1,137.4 505.8,135.6" stroke="#e6e6e6" stroke-width="0.7" fill="none"/><polyline points="458.3,192.7 459.9,190.8 461.6,186.8 463.2,182.4 464.9,178.1 466.5,173.9 468.2,169.8 469.8,165.9 471.5,162.2 473.1,158.7 474.8,155.5 476.4,152.4 478.1,149.7 479.7,147.3 481.4,145.3 483.0,143.5 484.7,142.0 486.3,140.9 488.0,140.0 489.6,139.4 491.3,139.1 492.9,139.0 494.5,139.1 496.2,139.4 497.8,139.8 499.5,140.4 501.1,141.0 502.8,141.6 504.4,139.8 506.1,137.9 507.7,136.0" stroke="#e6e6e6" stroke-width="0.7" fill="none"/><polyline points="460.6,193.3 462.2,191.4 463.9,187.5 465.5,183.1 467.1,178.7 468.8,174.5 470.4,170.3 472.1,166.4 473.7,162.7 475.3,159.2 477.0,155.9 478.6,152.9 480.2,150.2 481.9,147.8 483.5,145.8 485.1,144.0 486.8,142.5 488.4,141.4 490.0,140.5 491.7,139.9 493.3,139.6 495.0,139.5 496.6,139.6 498.2,139.8 499.9,140.3 501.5,140.8 503.1,141.4 504.8,142.1 506.4,140.2 508.0,138.3 509.7,136.4" stroke="#e6e6e6" stroke-width="0.7" fill="none"/><polyline points="462.9,193.9 464.5,192.0 466.1,188.1 467.8,183.7 469.4,179.3 471.0,175.1 472.6,170.9 474.3,167.0 475.9,163.3 477.5,159.7 479.1,156.5 480.8,153.5 482.4,150.8 484.0,148.4 485.6,146.3 487.3,144.5 488.9,143.1 490.5,141.9 492.1,141.0 493.8,140.4 495.4,140.1 497.0,140.0 498.6,140.1 500.3,140.3 501.9,140.7 503.5,141.3 505.1,141.9 506.8,142.5 508.4,140.6 510.0,138.7 511.6,136.8" stroke="#e6e6e6" stroke-width="0.7" fill="none"/><polyline points="465.2,194.6 466.8,192.7 468.4,188.7 470.0,184.3 471.7,180.0 473.3,175.7 474.9,171.6 476.5,167.6 478.1,163.9 479.7,160.4 481.3,157.1 482.9,154.1 484.6,151.4 486.2,149.0 487.8,146.9 489.4,145.1 491.0,143.7 492.6,142.5 494.2,141.6 495.8,141.0 497.5,140.6 499.1,140.5 500.7,140.6 502.3,140.8 503.9,141.2 505.5,141.8 507.1,142.3 508.8,143.0 510.4,141.1 512.0,139.1 513.6,137.2" stroke="#e6e6e6" stroke-width="0.7" fill="none"/><polyline points="467.5,195.2 469.1,193.3 470.7,189.4 472.3,185.0 473.9,180.6 475.5,176.4 477.1,172.3 478.7,168.3 480.3,164.6 481.9,161.1 483.5,157.8 485.1,154.8 486.7,152.1 488.3,149.7 489.9,147.6 491.5,145.8 493.1,144.3 494.7,143.1 496.3,142.2 497.9,141.6 499.5,141.2 501.1,141.1 502.7,141.1 504.3,141.4 505.9,141.8 507.5,142.2 509.1,142.8 510.7,143.4 512.3,141.5 513.9,139.6 515.5,137.7" stroke="#e6e6e6" stroke-width="0.7" fill="none"/><polyline points="469.8,195.9 471.4,193.9 473.0,190.0 474.6,185.6 476.2,181.3 477.7,177.1 479.3,173.0 480.9,169.1 482.5,165.3 484.1,161.8 485.7,158.6 487.3,155.6 488.9,152.9 490.5,150.5 492.1,148.4 493.6,146.6 495.2,145.1 496.8,143.8 498.4,142.9 500.0,142.3 501.6,141.9 503.2,141.7 504.8,141.7 506.4,141.9 508.0,142.3 509.5,142.8 511.1,143.3 512.7,143.9 514.3,141.9 515.9,140.0 517.5,138.1" stroke="#e6e6e6" stroke-width="0.7" fill="none"/><polyline points="472.1,196.5 473.7,194.6 475.3,190.7 476.8,186.3 478.4,182.0 480.0,177.8 481.6,173.7 483.1,169.8 484.7,166.1 486.3,162.6 487.9,159.4 489.5,156.4 491.0,153.7 492.6,151.3 494.2,149.2 495.8,147.4 497.4,145.9 498.9,144.6 500.5,143.7 502.1,143.0 503.7,142.6 505.2,142.4 506.8,142.4 508.4,142.6 510.0,142.9 511.6,143.3 513.1,143.8 514.7,144.3 516.3,142.4 517.9,140.4 519.4,138.5" stroke="#e6e6e6" stroke-width="0.7" fill="none"/><polyline points="474.4,197.2 476.0,195.2 477.5,191.3 479.1,187.0 480.7,182.8 482.2,178.6 483.8,174.6 485.4,170.7 486.9,167.0 488.5,163.5 490.1,160.3 491.6,157.3 493.2,154.6 494.8,152.2 496.3,150.1 497.9,148.3 499.5,146.8 501.0,145.5 502.6,144.6 504.2,143.8 505.7,143.4 507.3,143.1 508.9,143.1 510.4,143.2 512.0,143.5 513.6,143.8 515.1,144.3 516.7,144.7 518.3,142.8 519.8,140.9 521.4,138.9" stroke="#e6e6e6" stroke-width="0.7" fill="none"/><polyline points="476.7,197.8 478.3,195.9 479.8,192.0 481.4,187.7 482.9,183.5 484.5,179.4 486.0,175.4 487.6,171.6 489.1,167.9 490.7,164.5 492.3,161.3 493.8,158.4 495.4,155.7 496.9,153.3 498.5,151.2 500.0,149.3 501.6,147.8 503.1,146.5 504.7,145.5 506.2,144.8 507.8,144.2 509.4,144.0 510.9,143.9 512.5,143.9 514.0,144.1 515.6,144.4 517.1,144.8 518.7,145.2 520.2,143.2 521.8,141.3 523.4,139.3" stroke="#e6e6e6" stroke-width="0.7" fill="none"/><polyline points="479.0,198.4 480.5,196.5 482.1,192.7 483.6,188.5 485.2,184.4 486.7,180.3 488.3,176.4 489.8,172.6 491.3,169.0 492.9,165.6 494.4,162.4 496.0,159.5 497.5,156.8 499.1,154.4 500.6,152.3 502.2,150.5 503.7,148.9 505.2,147.6 506.8,146.6 508.3,145.8 509.9,145.2 511.4,144.9 513.0,144.7 514.5,144.7 516.0,144.8 517.6,145.0 519.1,145.3 520.7,145.6 522.2,143.7 523.8,141.7 525.3,139.8" stroke="#e6e6e6" stroke-width="0.7" fill="none"/><polyline points="481.3,199.1 482.8,197.1 484.4,193.4 485.9,189.3 487.4,185.2 489.0,181.3 490.5,177.4 492.0,173.7 493.6,170.2 495.1,166.8 496.6,163.7 498.2,160.8 499.7,158.2 501.2,155.8 502.7,153.7 504.3,151.8 505.8,150.2 507.3,148.9 508.9,147.8 510.4,146.9 511.9,146.3 513.5,145.9 515.0,145.6 516.5,145.5 518.1,145.5 519.6,145.7 521.1,145.8 522.7,146.1 524.2,144.1 525.7,142.1 527.3,140.2" stroke="#e6e6e6" stroke-width="0.7" fill="none"/><polyline points="483.6,199.7 485.1,197.8 486.6,194.1 488.2,190.1 489.7,186.2 491.2,182.3 492.7,178.6 494.2,175.0 495.8,171.5 497.3,168.3 498.8,165.2 500.3,162.3 501.8,159.7 503.4,157.4 504.9,155.2 506.4,153.4 507.9,151.8 509.4,150.4 511.0,149.2 512.5,148.3 514.0,147.6 515.5,147.1 517.1,146.7 518.6,146.5 520.1,146.4 521.6,146.4 523.1,146.4 524.7,146.5 526.2,144.5 527.7,142.6 529.2,140.6" stroke="#e6e6e6" stroke-width="0.7" fill="none"/><polyline points="485.9,200.4 487.4,198.4 488.9,194.9 490.4,191.1 491.9,187.3 493.4,183.6 495.0,180.0 496.5,176.5 498.0,173.2 499.5,170.0 501.0,167.0 502.5,164.3 504.0,161.7 505.5,159.4 507.0,157.2 508.5,155.4 510.0,153.7 511.6,152.3 513.1,151.0 514.6,150.0 516.1,149.2 517.6,148.5 519.1,147.9 520.6,147.5 522.1,147.2 523.6,147.1 525.1,146.9 526.6,146.9 528.2,144.9 529.7,143.0 531.2,141.0" stroke="#e6e6e6" stroke-width="0.7" fill="none"/><polyline points="488.2,201.0 489.7,199.0 491.2,195.8 492.7,192.2 494.2,188.7 495.7,185.2 497.2,181.9 498.7,178.6 500.2,175.5 501.7,172.5 503.2,169.6 504.7,167.0 506.2,164.5 507.7,162.2 509.2,160.1 510.7,158.2 512.2,156.5 513.7,154.9 515.2,153.6 516.7,152.4 518.1,151.3 519.6,150.3 521.1,149.4 522.6,148.6 524.1,148.0 525.6,147.5 527.1,147.2 528.6,147.0 530.1,145.2 531.6,143.3 533.1,141.4" stroke="#e6e6e6" stroke-width="0.7" fill="none"/><polyline points="490.5,201.7 492.0,199.7 493.5,197.3 495.0,194.8 496.4,192.3 497.9,189.8 499.4,187.4 500.9,185.0 502.4,182.6 503.9,180.3 505.4,178.0 506.8,175.8 508.3,173.7 509.8,170.6 511.3,166.6 512.8,163.8 514.3,162.6 515.8,162.6 517.2,162.0 518.7,160.2 520.2,158.2 521.7,156.2 523.2,153.9 524.7,151.6 526.2,149.6 527.6,148.1 529.1,147.0 530.6,146.2 532.1,144.9 533.6,143.4 535.1,141.7" stroke="#e6e6e6" stroke-width="0.7" fill="none"/><polyline points="492.8,202.3 494.3,200.3 495.7,198.3 497.2,196.3 498.7,194.3 500.2,192.3 501.6,190.3 503.1,188.3 504.6,186.3 506.1,184.1 507.5,181.8 509.0,178.9 510.5,175.4 512.0,171.2 513.4,167.2 514.9,164.4 516.4,163.2 517.9,163.2 519.3,163.2 520.8,162.5 522.3,160.7 523.8,157.8 525.2,154.1 526.7,150.2 528.2,146.8 529.7,144.7 531.1,143.9 532.6,143.7 534.1,143.6 535.6,143.0 537.0,141.7" stroke="#e6e6e6" stroke-width="0.7" fill="none"/><polyline points="495.1,202.9 496.6,200.9 498.0,198.9 499.5,196.9 501.0,194.9 502.4,192.9 503.9,190.9 505.3,188.9 506.8,186.8 508.3,184.7 509.7,182.4 511.2,179.5 512.7,176.0 514.1,171.8 515.6,167.8 517.0,165.0 518.5,163.8 520.0,163.7 521.4,163.6 522.9,162.6 524.4,160.2 525.8,156.1 527.3,150.8 528.7,145.1 530.2,140.5 531.7,138.2 533.1,138.4 534.6,140.0 536.1,141.6 537.5,142.2 539.0,141.7" stroke="#e6e6e6" stroke-width="0.7" fill="none"/><polyline points="497.4,203.6 498.9,201.6 500.3,199.6 501.8,197.5 503.2,195.5 504.7,193.5 506.1,191.5 507.6,189.5 509.0,187.4 510.5,185.3 511.9,183.0 513.4,180.1 514.8,176.6 516.3,172.5 517.7,168.5 519.2,165.7 520.6,164.5 522.1,164.3 523.5,164.1 525.0,162.9 526.4,160.0 527.9,155.1 529.3,148.6 530.8,141.7 532.2,136.2 533.7,133.8 535.1,134.7 536.6,137.6 538.0,140.3 539.5,141.8 540.9,141.8" stroke="#e6e6e6" stroke-width="0.7" fill="none"/><polyline points="499.7,204.2 501.1,202.2 502.6,200.2 504.0,198.2 505.5,196.1 506.9,194.1 508.3,192.1 509.8,190.1 511.2,188.0 512.7,185.9 514.1,183.5 515.5,180.8 517.0,177.3 518.4,173.3 519.9,169.5 521.3,166.7 522.7,165.4 524.2,165.1 525.6,164.8 527.1,163.5 528.5,160.7 529.9,156.0 531.4,149.8 532.8,143.2 534.2,138.0 535.7,135.6 537.1,136.3 538.6,138.8 540.0,141.2 541.4,142.5 542.9,142.3" stroke="#e6e6e6" stroke-width="0.7" fill="none"/><polyline points="502.0,204.9 503.4,202.8 504.9,200.8 506.3,198.8 507.7,196.7 509.1,194.7 510.6,192.7 512.0,190.7 513.4,188.6 514.9,186.5 516.3,184.2 517.7,181.5 519.1,178.2 520.6,174.4 522.0,170.7 523.4,168.0 524.8,166.7 526.3,166.2 527.7,165.8 529.1,164.5 530.6,162.2 532.0,158.5 533.4,153.8 534.8,148.8 536.3,144.7 537.7,142.4 539.1,142.2 540.6,143.1 542.0,143.9 543.4,144.0 544.8,143.1" stroke="#e6e6e6" stroke-width="0.7" fill="none"/><polyline points="504.3,205.5 505.7,203.5 507.1,201.4 508.5,199.4 510.0,197.4 511.4,195.3 512.8,193.3 514.2,191.2 515.6,189.2 517.0,187.1 518.5,184.8 519.9,182.2 521.3,179.2 522.7,175.8 524.1,172.5 525.5,170.0 527.0,168.4 528.4,167.6 529.8,166.9 531.2,165.6 532.6,163.7 534.0,161.0 535.5,157.8 536.9,154.4 538.3,151.4 539.7,149.3 541.1,148.1 542.5,147.3 544.0,146.6 545.4,145.5 546.8,144.0" stroke="#e6e6e6" stroke-width="0.7" fill="none"/><polyline points="506.6,206.2 508.0,204.1 509.4,202.1 510.8,200.0 512.2,198.0 513.6,195.9 515.0,193.9 516.4,191.8 517.8,189.8 519.2,187.7 520.6,185.5 522.1,183.1 523.5,180.4 524.9,177.4 526.3,174.6 527.7,172.2 529.1,170.5 530.5,169.2 531.9,168.1 533.3,166.6 534.7,164.8 536.1,162.6 537.5,160.2 538.9,157.8 540.3,155.4 541.7,153.4 543.1,151.6 544.5,149.9 545.9,148.3 547.3,146.5 548.7,144.7" stroke="#e6e6e6" stroke-width="0.7" fill="none"/><polyline points="508.9,206.8 510.3,204.7 511.7,202.7 513.1,200.6 514.5,198.6 515.9,196.5 517.3,194.5 518.7,192.4 520.0,190.4 521.4,188.3 522.8,186.2 524.2,183.9 525.6,181.5 527.0,178.9 528.4,176.4 529.8,174.1 531.2,172.3 532.6,170.7 534.0,169.2 535.4,167.5 536.8,165.6 538.2,163.5 539.6,161.4 540.9,159.3 542.3,157.2 543.7,155.1 545.1,153.1 546.5,151.1 547.9,149.2 549.3,147.2 550.7,145.2" stroke="#e6e6e6" stroke-width="0.7" fill="none"/><polyline points="508.9,206.8 550.7,145.2" stroke="#d8d8d8" stroke-width="0.8" fill="none"/><line x1="377" y1="141" x2="382.4" y2="180.8" stroke="#d27272" stroke-width="0.9" fill="none"/><line x1="374" y1="141.5" x2="380" y2="140.5" stroke="#d27272" stroke-width="0.9" fill="none"/><line x1="379.5" y1="181" x2="385.5" y2="180.5" stroke="#d27272" stroke-width="0.9" fill="none"/><line x1="394.9" y1="170" x2="450.7" y2="121.6" stroke="#d27272" stroke-width="0.9" fill="none"/><line x1="392" y1="184.9" x2="505.9" y2="217.6" stroke="#d27272" stroke-width="0.9" fill="none"/><line x1="503.5" y1="221" x2="508" y2="214" stroke="#d27272" stroke-width="0.9" fill="none"/><line x1="389" y1="188" x2="394" y2="181" stroke="#d27272" stroke-width="0.9" fill="none"/><line x1="446" y1="120" x2="455" y2="122" stroke="#d27272" stroke-width="0.9" fill="none"/><text x="0" y="0" fill="#d27272" font-family="Liberation Sans" font-size="6.2" transform="translate(376,168) rotate(-82)">40.5</text><text x="0" y="0" fill="#d27272" font-family="Liberation Sans" font-size="6.2" transform="translate(419,152) rotate(-41)">50.0</text><text x="0" y="0" fill="#d27272" font-family="Liberation Sans" font-size="6.2" transform="translate(437,204) rotate(16)">150.0</text><text x="0" y="0" fill="#d27272" font-family="Liberation Sans" font-size="6.2" transform="translate(500,233) rotate(-76)">53.0</text><text x="0" y="0" fill="#d27272" font-family="Liberation Sans" font-size="6.2" transform="translate(381,197) rotate(-40)">-52.0</text><text x="0" y="0" fill="#d27272" font-family="Liberation Sans" font-size="6.2" transform="translate(366,187) rotate(-40)">-36.5</text><text x="0" y="0" fill="#d27272" font-family="Liberation Sans" font-size="5" transform="translate(437,121) rotate(-14)">66.7</text><line x1="458.6" y1="90.5" x2="458.6" y2="125" stroke="#5a7272" stroke-width="0.8"/><line x1="480.3" y1="106.5" x2="480.3" y2="130.3" stroke="#2a2ae0" stroke-width="1"/><path d="M495.5,116.5 L497,114.9 L494.5,115.3" stroke="#d03030" stroke-width="0.8" fill="none"/><text x="478" y="101.5" fill="#3030e0" font-family="Liberation Sans" font-size="7">Z</text><line x1="480.3" y1="130.3" x2="497" y2="114.9" stroke="#d03030" stroke-width="0.9"/><line x1="480.3" y1="130.3" x2="513.3" y2="139.3" stroke="#30d030" stroke-width="1"/><defs><linearGradient id="cg0" x1="0" x2="1"><stop offset="0" stop-color="#8a8a8a"/><stop offset="0.45" stop-color="#d8d8d8"/><stop offset="1" stop-color="#b0b0b0"/></linearGradient></defs><path d="M356.7,121 L369,140 L374.4,121 Z" fill="url(#cg0)"/><ellipse cx="365.5" cy="120.8" rx="8.9" ry="2.6" fill="#d0d0d0"/><polyline points="322,134 325.1,146.7 345.2,133.7 368.8,139.9" stroke="#e8d820" stroke-width="1.3" fill="none"/><text x="360" y="139" fill="#d27272" font-family="Liberation Sans" font-size="5">10</text><polygon points="326.50,134.75 324.21,135.42 324.45,137.80 322.36,136.65 320.85,138.50 320.18,136.21 317.80,136.45 318.95,134.36 317.10,132.85 319.39,132.18 319.15,129.80 321.24,130.95 322.75,129.10 323.42,131.39 325.80,131.15 324.65,133.24" fill="#22e4f4"/><circle cx="321.8" cy="133.8" r="1.6" fill="#0a7a90"/><circle cx="321.8" cy="133.2" r="0.9" fill="#e8e020"/></svg>
<div class="a bL" style="left:216.20px;top:33.40px;width:24.60px;height:19.70px;color:#22dd22;font-size:6.4px;"><div class="bt">P</div></div>
<div class="a bL" style="left:216.20px;top:61.00px;width:24.60px;height:19.70px;font-size:6.4px;"><div class="bt">X</div></div>
<div class="a bL" style="left:216.20px;top:88.60px;width:24.60px;height:19.70px;font-size:6.4px;"><div class="bt">Y</div></div>
<div class="a bL" style="left:216.20px;top:116.20px;width:24.60px;height:19.70px;font-size:6.4px;"><div class="bt">Z</div></div>
<div class="a bL" style="left:216.20px;top:143.80px;width:24.60px;height:19.70px;color:#22dd22;font-size:6.4px;"><div class="bt">D</div></div>
<div class="a bL" style="left:216.20px;top:171.40px;width:24.60px;height:19.70px;font-size:6.4px;"><div class="bt">+</div></div>
<div class="a bL" style="left:216.20px;top:199.00px;width:24.60px;height:19.70px;font-size:6.4px;"><div class="bt">-</div></div>
<div class="a bL" style="left:216.20px;top:226.60px;width:24.60px;height:19.70px;font-size:6.4px;"><div class="bt">C</div></div>
<div class="a bL" style="left:7.50px;top:261.90px;width:91.00px;height:23.90px;font-size:6.3px;"><div class="bt"></div></div>
<div class="a t " style="left:-122.80px;top:258.80px;width:300px;height:30px;justify-content:center;text-align:center;font-size:6.9px;line-height:8.2px;color:#f0f0f0;font-weight:normal;">CYCLE<br>START</div>
<div class="a box" style="left:50.40px;top:267.90px;width:29.70px;height:11.90px;line-height:10px;font-size:7px;">1</div>
<div class="led" style="left:84.70px;top:269.40px;width:7.80px;height:7.80px;background:radial-gradient(circle at 42% 38%,#d0d0d0 0%,#707070 20%,#2a2a2a 55%,#151515 100%);border:1px solid #1aa01a;"></div>
<div class="a bL" style="left:6.20px;top:289.80px;width:44.40px;height:23.70px;color:#808080;font-size:6.6px;font-weight:normal;"><div class="bt">PAUSE</div></div>
<div class="a bL" style="left:55.40px;top:289.80px;width:44.30px;height:23.70px;font-size:6.6px;"><div class="bt">STOP</div></div>
<div class="a bL" style="left:6.20px;top:317.75px;width:44.40px;height:23.70px;color:#808080;font-size:6.6px;font-weight:normal;"><div class="bt">OPT<br>BLOCK</div></div>
<div class="a bL" style="left:55.40px;top:317.75px;width:44.30px;height:23.70px;color:#808080;font-size:6.6px;"><div class="bt">STEP</div></div>
<div class="a bL" style="left:6.20px;top:345.70px;width:44.40px;height:23.70px;color:#808080;font-size:6.6px;font-weight:normal;"><div class="bt">OPT<br>STOP</div></div>
<div class="a bL" style="left:55.40px;top:345.70px;width:44.30px;height:23.70px;font-size:6.6px;"><div class="bt">RELOAD</div></div>
<div class="a bL" style="left:6.20px;top:373.65px;width:44.40px;height:23.70px;font-size:6.6px;font-weight:normal;"><div class="bt">MIST<br>OFF</div></div>
<div class="a bL" style="left:55.40px;top:373.65px;width:44.30px;height:23.70px;font-size:6.6px;"><div class="bt">FLOOD<br>OFF</div></div>
<div class="a " style="left:4.20px;top:401.30px;width:97.70px;height:11.50px;will-change:transform;background:#fbfbfb;border:1px solid #8a8a8a;font-size:6.55px;color:#9a9a9a;text-align:center;line-height:10px;">Progress</div>
<div class="a t lbl" style="left:-28.70px;top:250.90px;width:300px;height:30px;justify-content:center;text-align:center;">UNITS</div>
<div class="a t lbl" style="left:5.30px;top:250.90px;width:300px;height:30px;justify-content:center;text-align:center;">STATE</div>
<div class="a t lbl" style="left:40.90px;top:250.90px;width:300px;height:30px;justify-content:center;text-align:center;">EOFFSET</div>
<div class="a box" style="left:108.90px;top:272.40px;width:24.70px;height:11.80px;line-height:10px;">MM</div>
<div class="a box" style="left:137.00px;top:272.40px;width:34.70px;height:11.80px;line-height:10px;">Stopped</div>
<div class="a box" style="left:175.70px;top:272.40px;width:30.00px;height:11.80px;line-height:10px;">0.000</div>
<div class="a t lbl" style="left:-28.70px;top:276.60px;width:300px;height:30px;justify-content:center;text-align:center;">TOOL</div>
<div class="a t lbl" style="left:5.30px;top:276.60px;width:300px;height:30px;justify-content:center;text-align:center;">DIA</div>
<div class="a t lbl" style="left:40.90px;top:276.60px;width:300px;height:30px;justify-content:center;text-align:center;">SCS</div>
<div class="a box" style="left:108.90px;top:298.50px;width:24.70px;height:11.70px;line-height:10px;">0</div>
<div class="a box" style="left:137.50px;top:298.50px;width:34.50px;height:11.70px;line-height:10px;">0</div>
<div class="a box" style="left:176.00px;top:298.50px;width:30.00px;height:11.70px;line-height:10px;">0</div>
<div class="a box" style="left:108.30px;top:317.30px;width:98.40px;height:14.50px;line-height:14px;font-size:7.2px;">No Tool</div>
<div class="a t lbl" style="left:-25.90px;top:332.60px;width:300px;height:30px;justify-content:center;text-align:center;font-weight:normal;">OPT BLK</div>
<div class="a t lbl" style="left:23.70px;top:332.60px;width:300px;height:30px;justify-content:center;text-align:center;font-weight:normal;">MIST</div>
<div class="led" style="left:144.70px;top:343.70px;width:7.80px;height:7.80px;background:radial-gradient(circle at 42% 38%,#d8ffd0 0%,#50f850 30%,#20c020 75%,#109010 100%);"></div>
<div class="led" style="left:194.10px;top:343.90px;width:7.40px;height:7.40px;background:radial-gradient(circle at 42% 38%,#d0d0d0 0%,#707070 20%,#2a2a2a 55%,#151515 100%);border:1px solid #1aa01a;"></div>
<div class="a t lbl" style="left:-25.90px;top:349.30px;width:300px;height:30px;justify-content:center;text-align:center;font-weight:normal;">OPT STP</div>
<div class="a t lbl" style="left:23.70px;top:349.30px;width:300px;height:30px;justify-content:center;text-align:center;font-weight:normal;">FLOOD</div>
<div class="led" style="left:144.70px;top:360.40px;width:7.80px;height:7.80px;background:radial-gradient(circle at 42% 38%,#d8ffd0 0%,#50f850 30%,#20c020 75%,#109010 100%);"></div>
<div class="led" style="left:194.10px;top:360.60px;width:7.40px;height:7.40px;background:radial-gradient(circle at 42% 38%,#d0d0d0 0%,#707070 20%,#2a2a2a 55%,#151515 100%);border:1px solid #1aa01a;"></div>
<div class="a t lbl" style="left:-25.90px;top:366.10px;width:300px;height:30px;justify-content:center;text-align:center;font-weight:normal;">IDLE</div>
<div class="a t lbl" style="left:23.70px;top:366.10px;width:300px;height:30px;justify-content:center;text-align:center;font-weight:normal;">PAUSED</div>
<div class="led" style="left:144.70px;top:377.20px;width:7.80px;height:7.80px;background:radial-gradient(circle at 42% 38%,#ffd0d0 0%,#ff4040 35%,#d01010 80%,#900808 100%);"></div>
<div class="led" style="left:194.10px;top:377.40px;width:7.40px;height:7.40px;background:radial-gradient(circle at 42% 38%,#d0d0d0 0%,#707070 20%,#2a2a2a 55%,#151515 100%);border:1px solid #a8a020;"></div>
<div class="a t lbl" style="left:-17.50px;top:381.40px;width:300px;height:30px;justify-content:center;text-align:center;font-weight:normal;">RUN TIME</div>
<div class="a box" style="left:110.50px;top:402.40px;width:44.60px;height:12.30px;line-height:10.5px;font-size:7.5px;">00:00:00</div>
<div class="a bL" style="left:160.30px;top:390.50px;width:44.40px;height:24.50px;color:#808080;font-size:6.6px;font-weight:normal;"><div class="bt">PAUSE<br>SPINDLE</div></div>
<div class="a bL" style="left:217.30px;top:266.50px;width:31.40px;height:24.10px;font-size:6.3px;"><div class="bt">WCS</div><svg class="arr" width="5" height="4" viewBox="0 0 5 4"><path d="M0.3,0.5 L4.3,3.3 M2.4,3.4 L4.5,3.4 L4.2,1.8" stroke="#9a9a9a" stroke-width="0.8" fill="none"/></svg></div>
<div class="a bL" style="left:251.50px;top:266.50px;width:31.20px;height:24.10px;color:#22dd22;font-size:6.3px;"><div class="bt">ABS</div></div>
<div class="a bL" style="left:285.40px;top:266.50px;width:31.00px;height:24.10px;font-size:6.3px;"><div class="bt">G54</div></div>
<div class="a bL" style="left:319.40px;top:266.50px;width:31.00px;height:24.10px;font-size:6.3px;"><div class="bt">DTG</div></div>
<div class="a bL" style="left:353.40px;top:266.50px;width:65.50px;height:24.10px;font-size:6.3px;"><div class="bt" style="right:auto;width:43.0px;">ALL<br>HOMED</div></div>
<div class="led" style="left:403.70px;top:274.90px;width:7.20px;height:7.20px;background:radial-gradient(circle at 42% 38%,#d8ffd0 0%,#50f850 30%,#20c020 75%,#109010 100%);"></div>
<div class="a bL" style="left:217.30px;top:297.50px;width:31.40px;height:24.10px;font-size:6.3px;"><div class="bt"></div></div>
<div class="a t " style="left:83.00px;top:294.85px;width:300px;height:30px;justify-content:center;text-align:center;font-size:14.5px;color:#2a86f0;">X</div>
<div class="a " style="left:251.00px;top:296.90px;width:65.80px;height:25.10px;background:#000;"></div>
<div class="a t " style="left:12.20px;top:294.95px;width:300px;height:30px;justify-content:flex-end;text-align:right;font-size:15.2px;color:#22e622;-webkit-text-stroke:0.15px #22e622;">20.000</div>
<div class="a bL" style="left:319.40px;top:297.50px;width:31.00px;height:24.10px;font-size:6.3px;"><div class="bt">ZERO</div></div>
<div class="a bL" style="left:353.40px;top:297.50px;width:30.90px;height:24.10px;font-size:6.3px;"><div class="bt">REFX</div><svg class="arr" width="5" height="4" viewBox="0 0 5 4"><path d="M0.3,0.5 L4.3,3.3 M2.4,3.4 L4.5,3.4 L4.2,1.8" stroke="#9a9a9a" stroke-width="0.8" fill="none"/></svg></div>
<div class="a bL" style="left:387.50px;top:297.50px;width:31.40px;height:24.10px;border-color:#4aa0e8;font-size:6.3px;"><div class="bt">HOME</div></div>
<div class="a bL" style="left:217.30px;top:328.50px;width:31.40px;height:24.10px;font-size:6.3px;"><div class="bt"></div></div>
<div class="a t " style="left:83.00px;top:325.85px;width:300px;height:30px;justify-content:center;text-align:center;font-size:14.5px;color:#2a86f0;">Y</div>
<div class="a " style="left:251.00px;top:327.90px;width:65.80px;height:25.10px;background:#000;"></div>
<div class="a t " style="left:12.20px;top:325.95px;width:300px;height:30px;justify-content:flex-end;text-align:right;font-size:15.2px;color:#22e622;-webkit-text-stroke:0.15px #22e622;">20.000</div>
<div class="a bL" style="left:319.40px;top:328.50px;width:31.00px;height:24.10px;font-size:6.3px;"><div class="bt">ZERO</div></div>
<div class="a bL" style="left:353.40px;top:328.50px;width:30.90px;height:24.10px;font-size:6.3px;"><div class="bt">REFY</div><svg class="arr" width="5" height="4" viewBox="0 0 5 4"><path d="M0.3,0.5 L4.3,3.3 M2.4,3.4 L4.5,3.4 L4.2,1.8" stroke="#9a9a9a" stroke-width="0.8" fill="none"/></svg></div>
<div class="a bL" style="left:387.50px;top:328.50px;width:31.40px;height:24.10px;font-size:6.3px;"><div class="bt">HOME</div></div>
<div class="a bL" style="left:217.30px;top:359.50px;width:31.40px;height:24.10px;font-size:6.3px;"><div class="bt"></div></div>
<div class="a t " style="left:83.00px;top:356.85px;width:300px;height:30px;justify-content:center;text-align:center;font-size:14.5px;color:#2a86f0;">Z</div>
<div class="a " style="left:251.00px;top:358.90px;width:65.80px;height:25.10px;background:#000;"></div>
<div class="a t " style="left:12.20px;top:356.95px;width:300px;height:30px;justify-content:flex-end;text-align:right;font-size:15.2px;color:#22e622;-webkit-text-stroke:0.15px #22e622;">-10.000</div>
<div class="a bL" style="left:319.40px;top:359.50px;width:31.00px;height:24.10px;font-size:6.3px;"><div class="bt">ZERO</div></div>
<div class="a bL" style="left:353.40px;top:359.50px;width:30.90px;height:24.10px;font-size:6.3px;"><div class="bt">REFZ</div><svg class="arr" width="5" height="4" viewBox="0 0 5 4"><path d="M0.3,0.5 L4.3,3.3 M2.4,3.4 L4.5,3.4 L4.2,1.8" stroke="#9a9a9a" stroke-width="0.8" fill="none"/></svg></div>
<div class="a bL" style="left:387.50px;top:359.50px;width:31.40px;height:24.10px;font-size:6.3px;"><div class="bt">HOME</div></div>
<div class="a " style="left:214.60px;top:394.90px;width:209.40px;height:9.30px;font-size:6.0px;line-height:8.5px;padding-left:1px;background:#f8f8f8;color:#222;border:1px solid #999;border-top-color:#666;">G8 G17 G21 G40 G49 G54 G64 G80 G90 G91.1 G94 G97 G99</div>
<div class="a " style="left:214.60px;top:406.30px;width:209.40px;height:9.90px;font-size:6.0px;line-height:8.5px;padding-left:1px;background:#f8f8f8;color:#222;border:1px solid #999;border-top-color:#666;">M0 M5 M9 M48 M53</div>
<div class="a t lbl" style="left:332.30px;top:263.30px;width:300px;height:30px;justify-content:center;text-align:center;font-size:6.5px;font-weight:normal;">MAX VELOCITY OVERRIDE</div>
<div class="a bL" style="left:431.30px;top:286.20px;width:19.40px;height:11.40px;font-size:6.8px;font-weight:normal;color:#e6e6a8;"><div class="bt">50</div></div>
<div class="a bL" style="left:514.30px;top:286.20px;width:19.40px;height:11.40px;font-size:6.8px;font-weight:normal;color:#e6e6a8;"><div class="bt">100</div></div>
<div class="a " style="left:453.60px;top:289.30px;width:57.80px;height:5.40px;background:#fafafa;"></div>
<div class="a " style="left:453.60px;top:289.30px;width:52.80px;height:5.40px;background:linear-gradient(90deg,#b4b4ff,#5a5af6);"></div>
<div class="a " style="left:504.40px;top:288.20px;width:7.00px;height:8.10px;background:linear-gradient(180deg,#f4f4f4,#c4c4c4);border:1px solid #6a6a6a;border-radius:1px;"></div>
<div class="a box" style="left:538.30px;top:273.80px;width:30.00px;height:12.00px;line-height:10px;">100 %</div>
<div class="a box" style="left:539.00px;top:288.00px;width:29.30px;height:11.60px;line-height:10px;">3600</div>
<div class="a t lbl" style="left:332.30px;top:302.40px;width:300px;height:30px;justify-content:center;text-align:center;font-size:6.5px;font-weight:normal;">RAPID OVERRIDE</div>
<div class="a bL" style="left:431.30px;top:325.30px;width:19.40px;height:11.40px;font-size:6.8px;font-weight:normal;color:#e6e6a8;"><div class="bt">50</div></div>
<div class="a bL" style="left:514.30px;top:325.30px;width:19.40px;height:11.40px;font-size:6.8px;font-weight:normal;color:#e6e6a8;"><div class="bt">100</div></div>
<div class="a " style="left:453.60px;top:328.40px;width:57.80px;height:5.40px;background:#fafafa;"></div>
<div class="a " style="left:453.60px;top:328.40px;width:52.80px;height:5.40px;background:linear-gradient(90deg,#b4b4ff,#5a5af6);"></div>
<div class="a " style="left:504.40px;top:327.30px;width:7.00px;height:8.10px;background:linear-gradient(180deg,#f4f4f4,#c4c4c4);border:1px solid #6a6a6a;border-radius:1px;"></div>
<div class="a box" style="left:538.30px;top:312.90px;width:30.00px;height:12.00px;line-height:10px;">100 %</div>
<div class="a box" style="left:539.00px;top:327.10px;width:29.30px;height:11.60px;line-height:10px;">3600</div>
<div class="a t lbl" style="left:332.30px;top:341.50px;width:300px;height:30px;justify-content:center;text-align:center;font-size:6.5px;font-weight:normal;">FEEDRATE OVERRIDE</div>
<div class="a bL" style="left:431.30px;top:364.40px;width:19.40px;height:11.40px;font-size:6.8px;font-weight:normal;color:#e6e6a8;"><div class="bt">50</div></div>
<div class="a bL" style="left:514.30px;top:364.40px;width:19.40px;height:11.40px;font-size:6.8px;font-weight:normal;color:#e6e6a8;"><div class="bt">100</div></div>
<div class="a " style="left:453.60px;top:367.50px;width:57.80px;height:5.40px;background:#fafafa;"></div>
<div class="a " style="left:453.60px;top:367.50px;width:45.08px;height:5.40px;background:linear-gradient(90deg,#b4b4ff,#5a5af6);"></div>
<div class="a " style="left:496.68px;top:366.40px;width:7.00px;height:8.10px;background:linear-gradient(180deg,#f4f4f4,#c4c4c4);border:1px solid #6a6a6a;border-radius:1px;"></div>
<div class="a box" style="left:538.30px;top:352.00px;width:30.00px;height:12.00px;line-height:10px;">100 %</div>
<div class="a box" style="left:539.00px;top:366.20px;width:29.30px;height:11.60px;line-height:10px;">0</div>
<div class="a t lbl" style="left:332.30px;top:380.60px;width:300px;height:30px;justify-content:center;text-align:center;font-size:6.5px;font-weight:normal;">SPINDLE OVERRIDE</div>
<div class="a bL" style="left:431.30px;top:403.50px;width:19.40px;height:11.40px;font-size:6.8px;font-weight:normal;color:#e6e6a8;"><div class="bt">50</div></div>
<div class="a bL" style="left:514.30px;top:403.50px;width:19.40px;height:11.40px;font-size:6.8px;font-weight:normal;color:#e6e6a8;"><div class="bt">100</div></div>
<div class="a " style="left:453.60px;top:406.60px;width:57.80px;height:5.40px;background:#fafafa;"></div>
<div class="a " style="left:453.60px;top:406.60px;width:27.70px;height:5.40px;background:linear-gradient(90deg,#b4b4ff,#5a5af6);"></div>
<div class="a " style="left:479.30px;top:405.50px;width:7.00px;height:8.10px;background:linear-gradient(180deg,#f4f4f4,#c4c4c4);border:1px solid #6a6a6a;border-radius:1px;"></div>
<div class="a box" style="left:538.30px;top:391.10px;width:30.00px;height:12.00px;line-height:10px;">100 %</div>
<div class="a box" style="left:539.00px;top:405.30px;width:29.30px;height:11.60px;line-height:10px;">0</div>
<div class="a bL" style="left:575.30px;top:263.30px;width:45.50px;height:24.30px;font-size:6.3px;"><div class="bt">MAN</div><div class="sled" style="background:radial-gradient(circle at 50% 50%,#1a1a1a 0%,#2a2a2a 45%,#8a8a8a 70%,#555 100%)"></div></div>
<div class="a bL" style="left:623.30px;top:263.30px;width:45.50px;height:24.30px;font-size:6.3px;"><div class="bt">MDI</div><div class="sled" style="background:radial-gradient(circle at 50% 50%,#1a1a1a 0%,#2a2a2a 45%,#8a8a8a 70%,#555 100%)"></div></div>
<div class="a bL" style="left:671.40px;top:263.30px;width:45.50px;height:24.30px;color:#22dd22;font-size:6.3px;"><div class="bt">AUTO</div><div class="sled" style="background:radial-gradient(circle at 40% 40%,#e0ffe0,#38f038 50%,#18a018)"></div></div>
<div class="a t lbl" style="left:495.10px;top:286.50px;width:300px;height:30px;justify-content:center;text-align:center;font-weight:normal;">SPINDLE</div>
<div class="a bL" style="left:575.30px;top:307.40px;width:44.10px;height:19.20px;color:#808080;font-size:6.3px;font-weight:normal;"><div class="bt">REV</div><div class="sled" style="background:radial-gradient(circle at 50% 50%,#1a1a1a 0%,#2a2a2a 45%,#8a8a8a 70%,#555 100%)"></div></div>
<div class="a bL" style="left:623.70px;top:307.40px;width:43.80px;height:19.20px;color:#808080;font-size:6.3px;font-weight:normal;"><div class="bt">STOP</div><div class="sled" style="background:radial-gradient(circle at 40% 40%,#ffd0d0,#ff2a2a 50%,#b01010)"></div></div>
<div class="a bL" style="left:671.80px;top:307.40px;width:43.90px;height:19.20px;color:#808080;font-size:6.3px;font-weight:normal;"><div class="bt">FWD</div><div class="sled" style="background:radial-gradient(circle at 50% 50%,#1a1a1a 0%,#2a2a2a 45%,#8a8a8a 70%,#555 100%)"></div></div>
<div class="a t lbl" style="left:441.70px;top:320.10px;width:300px;height:30px;justify-content:center;text-align:center;font-weight:normal;">RPM</div>
<div class="a t lbl" style="left:475.90px;top:320.10px;width:300px;height:30px;justify-content:center;text-align:center;font-weight:normal;">PWR</div>
<div class="a t lbl" style="left:511.30px;top:320.10px;width:300px;height:30px;justify-content:center;text-align:center;font-weight:normal;">AMPS</div>
<div class="a t lbl" style="left:547.10px;top:320.10px;width:300px;height:30px;justify-content:center;text-align:center;font-weight:normal;">FAULT</div>
<div class="a box" style="left:578.70px;top:341.60px;width:27.20px;height:11.20px;line-height:9.5px;">0</div>
<div class="a box" style="left:613.60px;top:341.60px;width:28.10px;height:11.20px;line-height:9.5px;">0.0</div>
<div class="a box" style="left:649.40px;top:341.60px;width:28.30px;height:11.20px;line-height:9.5px;">0.0</div>
<div class="a box" style="left:685.40px;top:341.60px;width:27.70px;height:11.20px;line-height:9.5px;">0x0</div>
<div class="a t lbl" style="left:460.70px;top:352.70px;width:300px;height:30px;justify-content:center;text-align:center;font-size:6.5px;font-weight:normal;">HOME SWITCHES</div>
<div class="a t lbl" style="left:510.70px;top:353.60px;width:300px;height:30px;justify-content:center;text-align:center;font-weight:normal;">PROBE</div>
<div class="a t lbl" style="left:549.80px;top:353.60px;width:300px;height:30px;justify-content:center;text-align:center;font-weight:normal;">LIMIT</div>
<div class="a t lbl" style="left:436.40px;top:364.30px;width:300px;height:30px;justify-content:center;text-align:center;font-weight:normal;">X</div>
<div class="led" style="left:590.80px;top:375.20px;width:7.20px;height:7.20px;background:radial-gradient(circle at 42% 38%,#d0d0d0 0%,#707070 20%,#2a2a2a 55%,#151515 100%);border:1px solid #1aa01a;"></div>
<div class="a t lbl" style="left:458.80px;top:364.30px;width:300px;height:30px;justify-content:center;text-align:center;font-weight:normal;">Y</div>
<div class="led" style="left:612.90px;top:375.20px;width:7.20px;height:7.20px;background:radial-gradient(circle at 42% 38%,#d0d0d0 0%,#707070 20%,#2a2a2a 55%,#151515 100%);border:1px solid #1aa01a;"></div>
<div class="a t lbl" style="left:480.40px;top:364.30px;width:300px;height:30px;justify-content:center;text-align:center;font-weight:normal;">Z</div>
<div class="led" style="left:634.80px;top:375.20px;width:7.20px;height:7.20px;background:radial-gradient(circle at 42% 38%,#d0d0d0 0%,#707070 20%,#2a2a2a 55%,#151515 100%);border:1px solid #1aa01a;"></div>
<div class="led" style="left:660.80px;top:376.70px;width:7.20px;height:7.20px;background:radial-gradient(circle at 42% 38%,#d0d0d0 0%,#707070 20%,#2a2a2a 55%,#151515 100%);border:1px solid #1aa01a;"></div>
<div class="led" style="left:695.80px;top:376.70px;width:7.20px;height:7.20px;background:radial-gradient(circle at 42% 38%,#d0d0d0 0%,#707070 20%,#2a2a2a 55%,#151515 100%);border:1px solid #b01818;"></div>
<div class="a " style="left:574.90px;top:395.80px;width:106.10px;height:18.20px;will-change:transform;font-size:9.35px;line-height:18px;text-align:center;background:#fafafa;color:#111;">07:30:29 PM</div>
<div class="a bL" style="left:682.60px;top:395.30px;width:34.20px;height:19.30px;font-size:6.3px;"><div class="bt">EXIT</div></div>
<div class="a " style="left:709.20px;top:421.10px;width:9.90px;height:8.90px;background:linear-gradient(160deg,#8ad860,#48a820 60%,#3a9a18);border-left:1px solid #d8d8d8;"></div>
<svg class="a" style="left:709.20px;top:421.1px;" width="10" height="9" viewBox="0 0 10 9"><path d="M2.2,4.8 C1.2,3.6 2.2,1.8 3.6,2.2 C4.2,0.9 6.4,0.9 7,2.2 C8.6,2.0 9.2,3.8 8.4,4.8 C9.0,6.2 7.6,7.6 6.4,7.0 C5.6,8.0 4.0,8.0 3.4,7.0 C2.0,7.4 1.4,5.8 2.2,4.8 Z" fill="#f4f4f4"/><circle cx="5.4" cy="2.6" r="0.7" fill="#58b030"/><path d="M5.3,3.8 L4.9,6.6" stroke="#58b030" stroke-width="1.1"/></svg>
<div class="a " style="left:719.00px;top:0.00px;width:721.00px;height:430.00px;background:#5a5a5a;"></div>
<div class="a " style="left:719.50px;top:0.00px;width:720.50px;height:420.20px;background:#18223a;"></div>
<div class="a " style="left:719.50px;top:0.00px;width:720.50px;height:1.00px;background:#000;"></div>
<div class="a " style="left:720.30px;top:1.80px;width:209.30px;height:256.40px;border:1px solid #d2902a;background:#525252;"></div>
<div class="a " style="left:930.70px;top:1.80px;width:507.80px;height:23.40px;border:1px solid #d2902a;background:#525252;"></div>
<div class="a " style="left:930.70px;top:26.20px;width:507.80px;height:232.00px;border:1px solid #d2902a;background:#5a5a5a;"></div>
<div class="a " style="left:720.30px;top:259.80px;width:103.70px;height:160.10px;border:1px solid #d2902a;background:#525252;"></div>
<div class="a " style="left:824.80px;top:259.80px;width:105.00px;height:160.10px;border:1px solid #d2902a;background:#525252;"></div>
<div class="a " style="left:930.70px;top:259.80px;width:215.50px;height:160.10px;border:1px solid #d2902a;background:#525252;"></div>
<div class="a " style="left:1147.30px;top:259.80px;width:144.30px;height:160.10px;border:1px solid #d2902a;background:#525252;"></div>
<div class="a " style="left:1292.20px;top:259.80px;width:146.30px;height:160.10px;border:1px solid #d2902a;background:#525252;"></div>
<div class="a " style="left:722.80px;top:5.40px;width:203.20px;height:15.60px;background:#f2f2f2;border:1px solid #c4c4c4;border-bottom-color:#a0a0a0;border-radius:2px;background:#f8f8f8;"></div>
<div class="a t " style="left:725.60px;top:-0.80px;width:400px;height:30px;justify-content:flex-start;font-size:7.33px;color:#1e1e1e;">/home/chris/linuxcnc/nc_files/examples/3D_Chips.ngc</div>
<div class="a " style="left:918.50px;top:5.50px;width:7.00px;height:14.00px;background:#ececec;"></div>
<div class="a" style="left:920.80px;top:11.5px;width:0;height:0;border-left:2.2px solid transparent;border-right:2.2px solid transparent;border-top:2.6px solid #888;"></div>
<div class="a " style="left:723.00px;top:20.00px;width:203.00px;height:217.80px;background:#c3c3c3;"></div>
<div class="a " style="left:723.00px;top:20.00px;width:37.30px;height:209.50px;background:#c8c8c8;"></div>
<div class="a t " style="left:458.80px;top:13.00px;width:300px;height:30px;justify-content:flex-end;text-align:right;font-family:'Liberation Mono',monospace;font-size:7.9px;color:#444;">1</div>
<div class="a code" style="left:761.20px;top:23.00px;width:158.30px;height:11px;overflow:hidden;"><span style="color:#1a1adc;background:#fff;">(</span><span style="color:#4a4a4a;"> This program is copyright of Ra</span></div>
<div class="a t " style="left:458.80px;top:22.97px;width:300px;height:30px;justify-content:flex-end;text-align:right;font-family:'Liberation Mono',monospace;font-size:7.9px;color:#444;">2</div>
<div class="a code" style="left:761.20px;top:32.97px;width:158.30px;height:11px;overflow:hidden;"><span style="color:#4a4a4a;">( It is released here under a GPL</span></div>
<div class="a t " style="left:458.80px;top:32.94px;width:300px;height:30px;justify-content:flex-end;text-align:right;font-family:'Liberation Mono',monospace;font-size:7.9px;color:#444;">3</div>
<div class="a code" style="left:761.20px;top:42.94px;width:158.30px;height:11px;overflow:hidden;"><span style="color:#4a4a4a;">( With scales factors set at 1.0,</span></div>
<div class="a t " style="left:458.80px;top:42.91px;width:300px;height:30px;justify-content:flex-end;text-align:right;font-family:'Liberation Mono',monospace;font-size:7.9px;color:#444;">4</div>
<div class="a code" style="left:761.20px;top:52.91px;width:158.30px;height:11px;overflow:hidden;"><span style="color:#4a4a4a;">( block with the zero point at th</span></div>
<div class="a t " style="left:458.80px;top:52.88px;width:300px;height:30px;justify-content:flex-end;text-align:right;font-family:'Liberation Mono',monospace;font-size:7.9px;color:#444;">5</div>
<div class="a code" style="left:761.20px;top:62.88px;width:158.30px;height:11px;overflow:hidden;"><span style="color:#4a4a4a;">( and Cutter is assumed to be a 1</span></div>
<div class="a t " style="left:458.80px;top:62.85px;width:300px;height:30px;justify-content:flex-end;text-align:right;font-family:'Liberation Mono',monospace;font-size:7.9px;color:#444;">6</div>
<div class="a code" style="left:761.20px;top:72.85px;width:158.30px;height:11px;overflow:hidden;"><span style="color:#4a4a4a;">( and feedrate is 450 mm/min )</span></div>
<div class="a t " style="left:458.80px;top:72.82px;width:300px;height:30px;justify-content:flex-end;text-align:right;font-family:'Liberation Mono',monospace;font-size:7.9px;color:#444;">7</div>
<div class="a t " style="left:458.80px;top:82.79px;width:300px;height:30px;justify-content:flex-end;text-align:right;font-family:'Liberation Mono',monospace;font-size:7.9px;color:#444;">8</div>
<div class="a code" style="left:761.20px;top:92.79px;width:158.30px;height:11px;overflow:hidden;"><span style="color:#d42020;">#</span><span style="color:#d85050;">&lt;</span><span style="color:#1e1ec8;font-weight:bold;">xscale</span><span style="color:#d85050;">&gt;</span><span style="color:#4a4a4a;"> </span><span style="color:#d42020;">=</span><span style="color:#4a4a4a;"> 1.0</span></div>
<div class="a t " style="left:458.80px;top:92.76px;width:300px;height:30px;justify-content:flex-end;text-align:right;font-family:'Liberation Mono',monospace;font-size:7.9px;color:#444;">9</div>
<div class="a code" style="left:761.20px;top:102.76px;width:158.30px;height:11px;overflow:hidden;"><span style="color:#d42020;">#</span><span style="color:#d85050;">&lt;</span><span style="color:#1e1ec8;font-weight:bold;">yscale</span><span style="color:#d85050;">&gt;</span><span style="color:#4a4a4a;"> </span><span style="color:#d42020;">=</span><span style="color:#4a4a4a;"> 1.0</span></div>
<div class="a t " style="left:458.80px;top:102.73px;width:300px;height:30px;justify-content:flex-end;text-align:right;font-family:'Liberation Mono',monospace;font-size:7.9px;color:#444;">10</div>
<div class="a code" style="left:761.20px;top:112.73px;width:158.30px;height:11px;overflow:hidden;"><span style="color:#d42020;">#</span><span style="color:#d85050;">&lt;</span><span style="color:#1e1ec8;font-weight:bold;">zscale</span><span style="color:#d85050;">&gt;</span><span style="color:#4a4a4a;"> </span><span style="color:#d42020;">=</span><span style="color:#4a4a4a;"> 1.0</span></div>
<div class="a t " style="left:458.80px;top:112.70px;width:300px;height:30px;justify-content:flex-end;text-align:right;font-family:'Liberation Mono',monospace;font-size:7.9px;color:#444;">11</div>
<div class="a code" style="left:761.20px;top:122.70px;width:158.30px;height:11px;overflow:hidden;"><span style="color:#d42020;">#</span><span style="color:#d85050;">&lt;</span><span style="color:#1e1ec8;font-weight:bold;">fscale</span><span style="color:#d85050;">&gt;</span><span style="color:#4a4a4a;"> </span><span style="color:#d42020;">=</span><span style="color:#4a4a4a;"> 10000.0</span></div>
<div class="a t " style="left:458.80px;top:122.67px;width:300px;height:30px;justify-content:flex-end;text-align:right;font-family:'Liberation Mono',monospace;font-size:7.9px;color:#444;">12</div>
<div class="a code" style="left:761.20px;top:132.67px;width:158.30px;height:11px;overflow:hidden;"><span style="color:#d42020;">#</span><span style="color:#d85050;">&lt;</span><span style="color:#1e1ec8;font-weight:bold;">toolno</span><span style="color:#d85050;">&gt;</span><span style="color:#4a4a4a;"> </span><span style="color:#d42020;">=</span><span style="color:#4a4a4a;"> 1</span></div>
<div class="a t " style="left:458.80px;top:132.64px;width:300px;height:30px;justify-content:flex-end;text-align:right;font-family:'Liberation Mono',monospace;font-size:7.9px;color:#444;">13</div>
<div class="a code" style="left:761.20px;top:142.64px;width:158.30px;height:11px;overflow:hidden;"><span style="color:#d42020;">#</span><span style="color:#d85050;">&lt;</span><span style="color:#1e1ec8;font-weight:bold;">rpm</span><span style="color:#d85050;">&gt;</span><span style="color:#4a4a4a;">    </span><span style="color:#d42020;">=</span><span style="color:#4a4a4a;"> 1600</span></div>
<div class="a t " style="left:458.80px;top:142.61px;width:300px;height:30px;justify-content:flex-end;text-align:right;font-family:'Liberation Mono',monospace;font-size:7.9px;color:#444;">14</div>
<div class="a t " style="left:458.80px;top:152.58px;width:300px;height:30px;justify-content:flex-end;text-align:right;font-family:'Liberation Mono',monospace;font-size:7.9px;color:#444;">15</div>
<div class="a code" style="left:761.20px;top:162.58px;width:158.30px;height:11px;overflow:hidden;"><span style="color:#1e1ec8;font-weight:bold;">N</span><span style="color:#4a4a4a;">30 </span><span style="color:#1e1ec8;font-weight:bold;">G</span><span style="color:#4a4a4a;">21</span></div>
<div class="a t " style="left:458.80px;top:162.55px;width:300px;height:30px;justify-content:flex-end;text-align:right;font-family:'Liberation Mono',monospace;font-size:7.9px;color:#444;">16</div>
<div class="a code" style="left:761.20px;top:172.55px;width:158.30px;height:11px;overflow:hidden;"><span style="color:#1e1ec8;font-weight:bold;">N</span><span style="color:#4a4a4a;">40</span><span style="color:#1e1ec8;font-weight:bold;">G</span><span style="color:#4a4a4a;">90</span></div>
<div class="a t " style="left:458.80px;top:172.52px;width:300px;height:30px;justify-content:flex-end;text-align:right;font-family:'Liberation Mono',monospace;font-size:7.9px;color:#444;">17</div>
<div class="a code" style="left:761.20px;top:182.52px;width:158.30px;height:11px;overflow:hidden;"><span style="color:#1e1ec8;font-weight:bold;">G</span><span style="color:#4a4a4a;">64</span><span style="color:#1e1ec8;font-weight:bold;">P</span><span style="color:#4a4a4a;">.1</span></div>
<div class="a t " style="left:458.80px;top:182.49px;width:300px;height:30px;justify-content:flex-end;text-align:right;font-family:'Liberation Mono',monospace;font-size:7.9px;color:#444;">18</div>
<div class="a code" style="left:761.20px;top:192.49px;width:158.30px;height:11px;overflow:hidden;"><span style="color:#1e1ec8;font-weight:bold;">N</span><span style="color:#4a4a4a;">50</span><span style="color:#1e1ec8;font-weight:bold;">T</span><span style="color:#d42020;">#</span><span style="color:#d85050;">&lt;</span><span style="color:#1e1ec8;font-weight:bold;">toolno</span><span style="color:#d85050;">&gt;</span><span style="color:#1e1ec8;font-weight:bold;">M</span><span style="color:#4a4a4a;">6</span></div>
<div class="a t " style="left:458.80px;top:192.46px;width:300px;height:30px;justify-content:flex-end;text-align:right;font-family:'Liberation Mono',monospace;font-size:7.9px;color:#444;">19</div>
<div class="a code" style="left:761.20px;top:202.46px;width:158.30px;height:11px;overflow:hidden;"><span style="color:#1e1ec8;font-weight:bold;">N</span><span style="color:#4a4a4a;">60</span><span style="color:#1e1ec8;font-weight:bold;">M</span><span style="color:#4a4a4a;">8</span></div>
<div class="a t " style="left:458.80px;top:202.43px;width:300px;height:30px;justify-content:flex-end;text-align:right;font-family:'Liberation Mono',monospace;font-size:7.9px;color:#444;">20</div>
<div class="a code" style="left:761.20px;top:212.43px;width:158.30px;height:11px;overflow:hidden;"><span style="color:#1e1ec8;font-weight:bold;">N</span><span style="color:#4a4a4a;">70</span><span style="color:#1e1ec8;font-weight:bold;">S</span><span style="color:#d42020;">#</span><span style="color:#d85050;">&lt;</span><span style="color:#1e1ec8;font-weight:bold;">rpm</span><span style="color:#d85050;">&gt;</span><span style="color:#1e1ec8;font-weight:bold;">M</span><span style="color:#4a4a4a;">3</span></div>
<div class="a t " style="left:458.80px;top:212.40px;width:300px;height:30px;justify-content:flex-end;text-align:right;font-family:'Liberation Mono',monospace;font-size:7.9px;color:#444;">21</div>
<div class="a code" style="left:761.20px;top:222.40px;width:158.30px;height:11px;overflow:hidden;"><span style="color:#1e1ec8;font-weight:bold;">N</span><span style="color:#4a4a4a;">90</span><span style="color:#1e1ec8;font-weight:bold;">G</span><span style="color:#4a4a4a;">0</span><span style="color:#1e1ec8;font-weight:bold;">Z</span><span style="color:#30b030;">[</span><span style="color:#d42020;">#</span><span style="color:#d85050;">&lt;</span><span style="color:#1e1ec8;font-weight:bold;">zscale</span><span style="color:#d85050;">&gt;</span><span style="color:#222;">*</span><span style="color:#4a4a4a;">10.</span><span style="color:#30b030;">]</span></div>
<div class="a " style="left:919.50px;top:20.00px;width:6.50px;height:210.80px;background:#dadada;"></div>
<div class="a " style="left:920.30px;top:30.00px;width:4.90px;height:15.50px;background:#f2f2f2;border:1px solid #b4b4b4;border-radius:2px;"></div>
<div class="a" style="left:921.00px;top:22.5px;width:0;height:0;border-left:1.8px solid transparent;border-right:1.8px solid transparent;border-bottom:2.2px solid #aaa;"></div>
<div class="a" style="left:921.00px;top:225px;width:0;height:0;border-left:1.8px solid transparent;border-right:1.8px solid transparent;border-top:2.4px solid #111;"></div>
<div class="a " style="left:723.00px;top:230.80px;width:196.50px;height:7.00px;background:#dadada;"></div>
<div class="a " style="left:730.50px;top:231.60px;width:78.50px;height:5.20px;background:#f2f2f2;border:1px solid #b8b8b8;border-radius:2px;"></div>
<div class="a" style="left:725.00px;top:232.5px;width:0;height:0;border-top:1.8px solid transparent;border-bottom:1.8px solid transparent;border-right:2.2px solid #aaa;"></div>
<div class="a" style="left:915.00px;top:232.5px;width:0;height:0;border-top:1.8px solid transparent;border-bottom:1.8px solid transparent;border-left:2.6px solid #111;"></div>
<div class="a " style="left:919.50px;top:230.80px;width:6.50px;height:7.00px;background:#cfcfcf;"></div>
<div class="a " style="left:721.30px;top:241.60px;width:206.50px;height:14.40px;background:#fafafa;border:1px solid #bbb;border-radius:3px;"></div>
<div class="a t " style="left:724.00px;top:234.00px;width:400px;height:30px;justify-content:flex-start;font-size:7px;color:#9a9a9a;">MDI:</div>
<div class="a bR" style="left:932.30px;top:3.30px;width:35.10px;height:20.30px;border-color:#22cc22;color:#22dd22;font-size:6.4px;"><div class="bt">MAIN</div></div>
<div class="a bR" style="left:970.40px;top:3.30px;width:35.10px;height:20.30px;font-size:6.4px;"><div class="bt">FILE</div></div>
<div class="a bR" style="left:1008.50px;top:3.30px;width:35.10px;height:20.30px;font-size:6.4px;"><div class="bt">OFFSETS</div></div>
<div class="a bR" style="left:1046.60px;top:3.30px;width:35.10px;height:20.30px;font-size:6.4px;"><div class="bt">TOOL</div></div>
<div class="a bR" style="left:1084.70px;top:3.30px;width:35.10px;height:20.30px;font-size:6.4px;"><div class="bt">STATUS</div></div>
<div class="a bR" style="left:1122.80px;top:3.30px;width:35.10px;height:20.30px;font-size:6.4px;"><div class="bt">PROBE</div></div>
<div class="a bR" style="left:1160.90px;top:3.30px;width:35.10px;height:20.30px;font-size:6.4px;"><div class="bt">GCODES</div></div>
<div class="a bR" style="left:1199.00px;top:3.30px;width:35.10px;height:20.30px;font-size:6.4px;"><div class="bt">SETUP</div></div>
<div class="a bR" style="left:1237.10px;top:3.30px;width:35.10px;height:20.30px;font-size:6.4px;"><div class="bt">SETTINGS</div></div>
<div class="a bR" style="left:1333.30px;top:3.50px;width:50.20px;height:19.90px;border-color:#22cc22;color:#22dd22;font-size:6.4px;"><div class="bt">MACHINE<br>ON</div></div>
<div class="a bR" style="left:1386.30px;top:3.50px;width:50.20px;height:19.90px;border-color:#22cc22;color:#22dd22;font-size:6.4px;"><div class="bt">ESTOP<br>RESET</div></div>
<div class="a " style="left:964.00px;top:27.50px;width:472.30px;height:228.00px;background:#000;"></div>
<svg class="a" style="left:963.00px;top:27.5px;" width="472.3" height="228" viewBox="245 27.5 472.3 228"><line x1="319.5" y1="119.8" x2="482.4" y2="27.5" stroke="#a01c1c" stroke-width="0.9" stroke-dasharray="1.1 1.7" fill="none"/><line x1="319.5" y1="119.8" x2="716.7" y2="220.8" stroke="#a01c1c" stroke-width="0.9" stroke-dasharray="1.1 1.7" fill="none"/><line x1="319.5" y1="119.8" x2="347.9" y2="255" stroke="#a01c1c" stroke-width="0.9" stroke-dasharray="1.1 1.7" fill="none"/><line x1="565.4" y1="43.3" x2="566.3" y2="27.5" stroke="#a01c1c" stroke-width="0.9" stroke-dasharray="1.1 1.7" fill="none"/><line x1="565.4" y1="43.3" x2="716.7" y2="62.8" stroke="#a01c1c" stroke-width="0.9" stroke-dasharray="1.1 1.7" fill="none"/><polyline points="565.4,43.3 482.3,132.8 424.6,184.9 356.6,255" stroke="#a01c1c" stroke-width="0.9" stroke-dasharray="1.1 1.7" fill="none"/><polyline points="400.8,176.6 402.7,174.9 404.7,173.2 406.6,171.5 408.5,169.8 410.5,168.1 412.4,166.4 414.4,164.7 416.3,163.0 418.2,161.2 420.2,159.5 422.1,157.6 424.0,155.5 426.0,153.3 427.9,151.1 429.9,149.2 431.8,147.7 433.7,146.5 435.7,145.3 437.6,143.9 439.5,142.4 441.5,140.7 443.4,139.0 445.3,137.3 447.3,135.6 449.2,133.9 451.2,132.2 453.1,130.5 455.0,128.9 457.0,127.2 458.9,125.5" stroke="#e6e6e6" stroke-width="0.7" fill="none"/><polyline points="403.1,177.2 405.0,175.5 407.0,173.8 408.9,172.1 410.8,170.4 412.7,168.7 414.7,167.0 416.6,165.3 418.5,163.5 420.4,161.8 422.4,159.9 424.3,157.9 426.2,155.5 428.1,152.9 430.1,150.3 432.0,148.3 433.9,146.9 435.8,146.0 437.8,145.2 439.7,144.1 441.6,142.6 443.5,140.9 445.5,139.1 447.4,137.2 449.3,135.4 451.2,133.8 453.2,132.2 455.1,130.7 457.0,129.2 458.9,127.6 460.9,125.9" stroke="#e6e6e6" stroke-width="0.7" fill="none"/><polyline points="405.4,177.9 407.3,176.2 409.2,174.4 411.1,172.7 413.1,171.0 415.0,169.3 416.9,167.6 418.8,165.9 420.7,164.1 422.6,162.3 424.5,160.4 426.4,158.1 428.4,155.4 430.3,152.4 432.2,149.4 434.1,147.1 436.0,145.9 437.9,145.4 439.8,145.0 441.8,144.1 443.7,142.5 445.6,140.4 447.5,138.0 449.4,135.7 451.3,133.7 453.2,132.3 455.2,131.2 457.1,130.2 459.0,129.1 460.9,127.8 462.8,126.2" stroke="#e6e6e6" stroke-width="0.7" fill="none"/><polyline points="407.7,178.5 409.6,176.8 411.5,175.1 413.4,173.4 415.3,171.6 417.2,169.9 419.1,168.2 421.0,166.4 422.9,164.7 424.8,162.9 426.7,160.9 428.6,158.5 430.5,155.5 432.4,152.0 434.3,148.7 436.2,146.3 438.1,145.2 440.0,145.0 441.9,144.8 443.8,143.9 445.7,141.9 447.6,138.8 449.5,135.2 451.4,131.8 453.3,129.4 455.2,128.4 457.2,128.3 459.1,128.6 461.0,128.4 462.9,127.7 464.8,126.5" stroke="#e6e6e6" stroke-width="0.7" fill="none"/><polyline points="410.0,179.2 411.9,177.4 413.8,175.7 415.7,174.0 417.6,172.2 419.5,170.5 421.3,168.8 423.2,167.0 425.1,165.3 427.0,163.4 428.9,161.4 430.8,158.9 432.7,155.7 434.6,152.0 436.5,148.5 438.4,146.0 440.2,145.0 442.1,144.9 444.0,144.8 445.9,143.6 447.8,140.8 449.7,136.5 451.6,131.3 453.5,126.5 455.4,123.5 457.3,123.0 459.2,124.4 461.0,126.2 462.9,127.4 464.8,127.5 466.7,126.7" stroke="#e6e6e6" stroke-width="0.7" fill="none"/><polyline points="412.3,179.8 414.2,178.1 416.1,176.3 417.9,174.6 419.8,172.9 421.7,171.1 423.6,169.4 425.5,167.6 427.3,165.9 429.2,164.0 431.1,161.9 433.0,159.4 434.8,156.1 436.7,152.3 438.6,148.6 440.5,146.1 442.4,145.1 444.2,145.1 446.1,145.0 448.0,143.6 449.9,140.4 451.8,135.3 453.6,129.1 455.5,123.4 457.4,120.1 459.3,120.0 461.2,122.2 463.0,125.0 464.9,127.0 466.8,127.5 468.7,126.9" stroke="#e6e6e6" stroke-width="0.7" fill="none"/><polyline points="414.6,180.5 416.5,178.7 418.3,177.0 420.2,175.2 422.1,173.5 423.9,171.7 425.8,170.0 427.7,168.2 429.5,166.4 431.4,164.6 433.3,162.5 435.1,159.9 437.0,156.6 438.9,152.7 440.7,149.0 442.6,146.4 444.5,145.4 446.3,145.5 448.2,145.5 450.1,144.3 451.9,141.4 453.8,136.7 455.7,131.0 457.5,125.7 459.4,122.6 461.3,122.3 463.1,124.0 465.0,126.3 466.9,127.9 468.8,128.2 470.6,127.4" stroke="#e6e6e6" stroke-width="0.7" fill="none"/><polyline points="416.9,181.1 418.8,179.3 420.6,177.6 422.5,175.8 424.3,174.1 426.2,172.3 428.0,170.6 429.9,168.8 431.7,167.0 433.6,165.2 435.5,163.1 437.3,160.4 439.2,157.1 441.0,153.2 442.9,149.4 444.7,146.8 446.6,145.9 448.4,146.1 450.3,146.2 452.2,145.4 454.0,143.2 455.9,139.8 457.7,135.6 459.6,131.8 461.4,129.2 463.3,128.3 465.1,128.7 467.0,129.4 468.9,129.7 470.7,129.2 472.6,128.1" stroke="#e6e6e6" stroke-width="0.7" fill="none"/><polyline points="419.2,181.7 421.0,180.0 422.9,178.2 424.7,176.5 426.6,174.7 428.4,172.9 430.3,171.2 432.1,169.4 434.0,167.6 435.8,165.7 437.6,163.6 439.5,161.0 441.3,157.7 443.2,153.7 445.0,149.9 446.9,147.3 448.7,146.4 450.6,146.6 452.4,146.9 454.2,146.5 456.1,145.0 457.9,142.7 459.8,140.0 461.6,137.3 463.5,135.2 465.3,133.8 467.1,133.0 469.0,132.3 470.8,131.4 472.7,130.2 474.5,128.7" stroke="#e6e6e6" stroke-width="0.7" fill="none"/><polyline points="421.5,182.4 423.3,180.6 425.2,178.8 427.0,177.1 428.8,175.3 430.7,173.5 432.5,171.8 434.3,170.0 436.2,168.2 438.0,166.3 439.8,164.2 441.7,161.6 443.5,158.2 445.3,154.2 447.2,150.5 449.0,147.8 450.8,146.9 452.7,147.2 454.5,147.5 456.3,147.3 458.2,146.2 460.0,144.5 461.8,142.5 463.7,140.5 465.5,138.6 467.3,137.0 469.1,135.5 471.0,134.0 472.8,132.5 474.6,130.9 476.5,129.2" stroke="#e6e6e6" stroke-width="0.7" fill="none"/><polyline points="423.8,183.0 425.6,181.2 427.4,179.5 429.3,177.7 431.1,175.9 432.9,174.1 434.7,172.4 436.5,170.6 438.4,168.8 440.2,166.9 442.0,164.8 443.8,162.1 445.7,158.8 447.5,154.8 449.3,151.0 451.1,148.4 452.9,147.4 454.8,147.7 456.6,148.1 458.4,147.9 460.2,146.9 462.0,145.4 463.9,143.7 465.7,141.9 467.5,140.1 469.3,138.3 471.1,136.6 473.0,134.9 474.8,133.2 476.6,131.4 478.4,129.7" stroke="#e6e6e6" stroke-width="0.7" fill="none"/><polyline points="426.1,183.7 427.9,181.9 429.7,180.1 431.5,178.3 433.3,176.5 435.1,174.7 437.0,173.0 438.8,171.2 440.6,169.4 442.4,167.5 444.2,165.3 446.0,162.7 447.8,159.3 449.6,155.3 451.4,151.5 453.2,148.9 455.1,147.9 456.9,148.2 458.7,148.6 460.5,148.4 462.3,147.5 464.1,146.0 465.9,144.3 467.7,142.6 469.5,140.8 471.3,139.0 473.1,137.2 475.0,135.4 476.8,133.7 478.6,131.9 480.4,130.1" stroke="#e6e6e6" stroke-width="0.7" fill="none"/><polyline points="428.4,184.3 430.2,182.5 432.0,180.7 433.8,178.9 435.6,177.1 437.4,175.3 439.2,173.6 441.0,171.8 442.8,169.9 444.6,168.0 446.4,165.9 448.2,163.2 450.0,159.9 451.8,155.9 453.6,152.1 455.4,149.4 457.2,148.5 459.0,148.7 460.8,149.1 462.6,148.9 464.4,148.0 466.2,146.5 468.0,144.8 469.8,143.1 471.6,141.3 473.3,139.5 475.1,137.7 476.9,135.9 478.7,134.1 480.5,132.3 482.3,130.5" stroke="#e6e6e6" stroke-width="0.7" fill="none"/><polyline points="430.7,185.0 432.5,183.2 434.3,181.4 436.1,179.6 437.8,177.8 439.6,176.0 441.4,174.2 443.2,172.3 445.0,170.5 446.8,168.6 448.6,166.5 450.4,163.8 452.1,160.4 453.9,156.4 455.7,152.6 457.5,150.0 459.3,149.0 461.1,149.2 462.9,149.6 464.6,149.4 466.4,148.5 468.2,147.0 470.0,145.3 471.8,143.5 473.6,141.7 475.4,139.9 477.1,138.1 478.9,136.3 480.7,134.5 482.5,132.7 484.3,130.9" stroke="#e6e6e6" stroke-width="0.7" fill="none"/><polyline points="433.0,185.6 434.8,183.8 436.5,181.0 438.3,177.9 440.1,174.9 441.9,172.0 443.6,169.1 445.4,166.3 447.2,163.6 449.0,161.0 450.7,158.5 452.5,156.2 454.3,154.0 456.1,151.9 457.8,150.0 459.6,148.3 461.4,146.7 463.2,145.2 464.9,143.9 466.7,142.7 468.5,141.7 470.3,140.8 472.0,139.9 473.8,139.2 475.6,138.5 477.4,137.9 479.1,137.3 480.9,136.8 482.7,135.0 484.5,133.2 486.2,131.4" stroke="#e6e6e6" stroke-width="0.7" fill="none"/><polyline points="435.3,186.2 437.1,184.4 438.8,181.2 440.6,177.7 442.4,174.3 444.1,170.9 445.9,167.6 447.6,164.4 449.4,161.3 451.2,158.4 452.9,155.7 454.7,153.1 456.5,150.8 458.2,148.7 460.0,146.7 461.7,145.0 463.5,143.5 465.3,142.1 467.0,141.0 468.8,140.1 470.6,139.3 472.3,138.7 474.1,138.2 475.9,137.9 477.6,137.6 479.4,137.5 481.1,137.3 482.9,137.2 484.7,135.4 486.4,133.6 488.2,131.8" stroke="#e6e6e6" stroke-width="0.7" fill="none"/><polyline points="437.6,186.9 439.4,185.1 441.1,181.7 442.9,177.9 444.6,174.2 446.4,170.6 448.1,167.1 449.9,163.7 451.6,160.5 453.4,157.5 455.1,154.6 456.9,151.9 458.6,149.5 460.4,147.3 462.1,145.3 463.9,143.6 465.6,142.1 467.4,140.9 469.1,139.8 470.9,139.0 472.6,138.4 474.4,137.9 476.1,137.6 477.9,137.5 479.6,137.4 481.4,137.5 483.1,137.6 484.9,137.7 486.6,135.9 488.4,134.0 490.2,132.2" stroke="#e6e6e6" stroke-width="0.7" fill="none"/><polyline points="439.9,187.5 441.6,185.7 443.4,182.2 445.1,178.3 446.9,174.4 448.6,170.7 450.3,167.0 452.1,163.5 453.8,160.2 455.6,157.0 457.3,154.1 459.0,151.3 460.8,148.8 462.5,146.6 464.3,144.6 466.0,142.9 467.7,141.4 469.5,140.2 471.2,139.2 473.0,138.4 474.7,137.9 476.4,137.6 478.2,137.4 479.9,137.3 481.7,137.4 483.4,137.6 485.1,137.8 486.9,138.1 488.6,136.3 490.4,134.5 492.1,132.6" stroke="#e6e6e6" stroke-width="0.7" fill="none"/><polyline points="442.2,188.2 443.9,186.3 445.7,182.7 447.4,178.7 449.1,174.7 450.8,170.9 452.6,167.3 454.3,163.8 456.0,160.5 457.8,157.2 459.5,154.1 461.2,151.1 462.9,148.5 464.7,146.2 466.4,144.2 468.1,142.5 469.9,141.0 471.6,139.8 473.3,138.9 475.0,138.2 476.8,137.7 478.5,137.4 480.2,137.3 482.0,137.4 483.7,137.6 485.4,137.8 487.1,138.2 488.9,138.6 490.6,136.7 492.3,134.9 494.1,133.0" stroke="#e6e6e6" stroke-width="0.7" fill="none"/><polyline points="444.5,188.8 446.2,187.0 447.9,183.3 449.7,179.2 451.4,175.2 453.1,171.4 454.8,168.1 456.5,165.1 458.2,162.2 460.0,158.8 461.7,155.1 463.4,151.5 465.1,148.5 466.8,146.1 468.5,144.0 470.3,142.3 472.0,140.8 473.7,139.6 475.4,138.7 477.1,138.1 478.8,137.6 480.6,137.4 482.3,137.4 484.0,137.5 485.7,137.8 487.4,138.1 489.1,138.5 490.9,139.0 492.6,137.2 494.3,135.3 496.0,133.5" stroke="#e6e6e6" stroke-width="0.7" fill="none"/><polyline points="446.8,189.5 448.5,187.6 450.2,183.8 451.9,179.7 453.6,175.7 455.3,172.2 457.0,169.6 458.7,167.7 460.4,165.6 462.1,162.0 463.9,157.3 465.6,152.6 467.3,148.9 469.0,146.1 470.7,144.0 472.4,142.2 474.1,140.8 475.8,139.6 477.5,138.7 479.2,138.1 480.9,137.7 482.6,137.5 484.3,137.5 486.0,137.7 487.7,138.0 489.4,138.4 491.1,138.9 492.8,139.4 494.6,137.6 496.3,135.7 498.0,133.9" stroke="#e6e6e6" stroke-width="0.7" fill="none"/><polyline points="449.1,190.1 450.8,188.2 452.5,184.4 454.2,180.2 455.9,176.2 457.6,172.9 459.3,170.8 461.0,169.7 462.7,168.2 464.3,164.6 466.0,159.0 467.7,153.5 469.4,149.3 471.1,146.3 472.8,144.1 474.5,142.3 476.2,140.9 477.9,139.7 479.6,138.8 481.3,138.2 483.0,137.8 484.7,137.7 486.4,137.7 488.1,138.0 489.8,138.3 491.4,138.8 493.1,139.3 494.8,139.9 496.5,138.0 498.2,136.2 499.9,134.3" stroke="#e6e6e6" stroke-width="0.7" fill="none"/><polyline points="451.4,190.7 453.1,188.9 454.8,185.0 456.4,180.7 458.1,176.7 459.8,173.2 461.5,170.7 463.2,169.1 464.9,167.1 466.5,163.5 468.2,158.4 469.9,153.3 471.6,149.3 473.3,146.4 475.0,144.3 476.6,142.5 478.3,141.0 480.0,139.9 481.7,139.0 483.4,138.4 485.0,138.1 486.7,137.9 488.4,138.0 490.1,138.3 491.8,138.6 493.5,139.1 495.1,139.7 496.8,140.3 498.5,138.5 500.2,136.6 501.9,134.7" stroke="#e6e6e6" stroke-width="0.7" fill="none"/><polyline points="453.7,191.4 455.4,189.5 457.0,185.6 458.7,181.3 460.4,177.1 462.1,173.2 463.7,169.9 465.4,167.0 467.1,164.1 468.7,160.6 470.4,156.5 472.1,152.5 473.7,149.2 475.4,146.6 477.1,144.5 478.8,142.8 480.4,141.3 482.1,140.2 483.8,139.3 485.4,138.7 487.1,138.4 488.8,138.2 490.5,138.3 492.1,138.6 493.8,139.0 495.5,139.5 497.1,140.1 498.8,140.8 500.5,138.9 502.2,137.0 503.8,135.1" stroke="#e6e6e6" stroke-width="0.7" fill="none"/><polyline points="456.0,192.0 457.7,190.1 459.3,186.2 461.0,181.9 462.6,177.6 464.3,173.4 466.0,169.5 467.6,165.9 469.3,162.4 470.9,158.9 472.6,155.4 474.3,152.2 475.9,149.4 477.6,146.9 479.2,144.9 480.9,143.1 482.5,141.6 484.2,140.5 485.9,139.6 487.5,139.0 489.2,138.7 490.8,138.6 492.5,138.7 494.2,139.0 495.8,139.4 497.5,139.9 499.1,140.6 500.8,141.2 502.5,139.3 504.1,137.4 505.8,135.6" stroke="#e6e6e6" stroke-width="0.7" fill="none"/><polyline points="458.3,192.7 459.9,190.8 461.6,186.8 463.2,182.4 464.9,178.1 466.5,173.9 468.2,169.8 469.8,165.9 471.5,162.2 473.1,158.7 474.8,155.5 476.4,152.4 478.1,149.7 479.7,147.3 481.4,145.3 483.0,143.5 484.7,142.0 486.3,140.9 488.0,140.0 489.6,139.4 491.3,139.1 492.9,139.0 494.5,139.1 496.2,139.4 497.8,139.8 499.5,140.4 501.1,141.0 502.8,141.6 504.4,139.8 506.1,137.9 507.7,136.0" stroke="#e6e6e6" stroke-width="0.7" fill="none"/><polyline points="460.6,193.3 462.2,191.4 463.9,187.5 465.5,183.1 467.1,178.7 468.8,174.5 470.4,170.3 472.1,166.4 473.7,162.7 475.3,159.2 477.0,155.9 478.6,152.9 480.2,150.2 481.9,147.8 483.5,145.8 485.1,144.0 486.8,142.5 488.4,141.4 490.0,140.5 491.7,139.9 493.3,139.6 495.0,139.5 496.6,139.6 498.2,139.8 499.9,140.3 501.5,140.8 503.1,141.4 504.8,142.1 506.4,140.2 508.0,138.3 509.7,136.4" stroke="#e6e6e6" stroke-width="0.7" fill="none"/><polyline points="462.9,193.9 464.5,192.0 466.1,188.1 467.8,183.7 469.4,179.3 471.0,175.1 472.6,170.9 474.3,167.0 475.9,163.3 477.5,159.7 479.1,156.5 480.8,153.5 482.4,150.8 484.0,148.4 485.6,146.3 487.3,144.5 488.9,143.1 490.5,141.9 492.1,141.0 493.8,140.4 495.4,140.1 497.0,140.0 498.6,140.1 500.3,140.3 501.9,140.7 503.5,141.3 505.1,141.9 506.8,142.5 508.4,140.6 510.0,138.7 511.6,136.8" stroke="#e6e6e6" stroke-width="0.7" fill="none"/><polyline points="465.2,194.6 466.8,192.7 468.4,188.7 470.0,184.3 471.7,180.0 473.3,175.7 474.9,171.6 476.5,167.6 478.1,163.9 479.7,160.4 481.3,157.1 482.9,154.1 484.6,151.4 486.2,149.0 487.8,146.9 489.4,145.1 491.0,143.7 492.6,142.5 494.2,141.6 495.8,141.0 497.5,140.6 499.1,140.5 500.7,140.6 502.3,140.8 503.9,141.2 505.5,141.8 507.1,142.3 508.8,143.0 510.4,141.1 512.0,139.1 513.6,137.2" stroke="#e6e6e6" stroke-width="0.7" fill="none"/><polyline points="467.5,195.2 469.1,193.3 470.7,189.4 472.3,185.0 473.9,180.6 475.5,176.4 477.1,172.3 478.7,168.3 480.3,164.6 481.9,161.1 483.5,157.8 485.1,154.8 486.7,152.1 488.3,149.7 489.9,147.6 491.5,145.8 493.1,144.3 494.7,143.1 496.3,142.2 497.9,141.6 499.5,141.2 501.1,141.1 502.7,141.1 504.3,141.4 505.9,141.8 507.5,142.2 509.1,142.8 510.7,143.4 512.3,141.5 513.9,139.6 515.5,137.7" stroke="#e6e6e6" stroke-width="0.7" fill="none"/><polyline points="469.8,195.9 471.4,193.9 473.0,190.0 474.6,185.6 476.2,181.3 477.7,177.1 479.3,173.0 480.9,169.1 482.5,165.3 484.1,161.8 485.7,158.6 487.3,155.6 488.9,152.9 490.5,150.5 492.1,148.4 493.6,146.6 495.2,145.1 496.8,143.8 498.4,142.9 500.0,142.3 501.6,141.9 503.2,141.7 504.8,141.7 506.4,141.9 508.0,142.3 509.5,142.8 511.1,143.3 512.7,143.9 514.3,141.9 515.9,140.0 517.5,138.1" stroke="#e6e6e6" stroke-width="0.7" fill="none"/><polyline points="472.1,196.5 473.7,194.6 475.3,190.7 476.8,186.3 478.4,182.0 480.0,177.8 481.6,173.7 483.1,169.8 484.7,166.1 486.3,162.6 487.9,159.4 489.5,156.4 491.0,153.7 492.6,151.3 494.2,149.2 495.8,147.4 497.4,145.9 498.9,144.6 500.5,143.7 502.1,143.0 503.7,142.6 505.2,142.4 506.8,142.4 508.4,142.6 510.0,142.9 511.6,143.3 513.1,143.8 514.7,144.3 516.3,142.4 517.9,140.4 519.4,138.5" stroke="#e6e6e6" stroke-width="0.7" fill="none"/><polyline points="474.4,197.2 476.0,195.2 477.5,191.3 479.1,187.0 480.7,182.8 482.2,178.6 483.8,174.6 485.4,170.7 486.9,167.0 488.5,163.5 490.1,160.3 491.6,157.3 493.2,154.6 494.8,152.2 496.3,150.1 497.9,148.3 499.5,146.8 501.0,145.5 502.6,144.6 504.2,143.8 505.7,143.4 507.3,143.1 508.9,143.1 510.4,143.2 512.0,143.5 513.6,143.8 515.1,144.3 516.7,144.7 518.3,142.8 519.8,140.9 521.4,138.9" stroke="#e6e6e6" stroke-width="0.7" fill="none"/><polyline points="476.7,197.8 478.3,195.9 479.8,192.0 481.4,187.7 482.9,183.5 484.5,179.4 486.0,175.4 487.6,171.6 489.1,167.9 490.7,164.5 492.3,161.3 493.8,158.4 495.4,155.7 496.9,153.3 498.5,151.2 500.0,149.3 501.6,147.8 503.1,146.5 504.7,145.5 506.2,144.8 507.8,144.2 509.4,144.0 510.9,143.9 512.5,143.9 514.0,144.1 515.6,144.4 517.1,144.8 518.7,145.2 520.2,143.2 521.8,141.3 523.4,139.3" stroke="#e6e6e6" stroke-width="0.7" fill="none"/><polyline points="479.0,198.4 480.5,196.5 482.1,192.7 483.6,188.5 485.2,184.4 486.7,180.3 488.3,176.4 489.8,172.6 491.3,169.0 492.9,165.6 494.4,162.4 496.0,159.5 497.5,156.8 499.1,154.4 500.6,152.3 502.2,150.5 503.7,148.9 505.2,147.6 506.8,146.6 508.3,145.8 509.9,145.2 511.4,144.9 513.0,144.7 514.5,144.7 516.0,144.8 517.6,145.0 519.1,145.3 520.7,145.6 522.2,143.7 523.8,141.7 525.3,139.8" stroke="#e6e6e6" stroke-width="0.7" fill="none"/><polyline points="481.3,199.1 482.8,197.1 484.4,193.4 485.9,189.3 487.4,185.2 489.0,181.3 490.5,177.4 492.0,173.7 493.6,170.2 495.1,166.8 496.6,163.7 498.2,160.8 499.7,158.2 501.2,155.8 502.7,153.7 504.3,151.8 505.8,150.2 507.3,148.9 508.9,147.8 510.4,146.9 511.9,146.3 513.5,145.9 515.0,145.6 516.5,145.5 518.1,145.5 519.6,145.7 521.1,145.8 522.7,146.1 524.2,144.1 525.7,142.1 527.3,140.2" stroke="#e6e6e6" stroke-width="0.7" fill="none"/><polyline points="483.6,199.7 485.1,197.8 486.6,194.1 488.2,190.1 489.7,186.2 491.2,182.3 492.7,178.6 494.2,175.0 495.8,171.5 497.3,168.3 498.8,165.2 500.3,162.3 501.8,159.7 503.4,157.4 504.9,155.2 506.4,153.4 507.9,151.8 509.4,150.4 511.0,149.2 512.5,148.3 514.0,147.6 515.5,147.1 517.1,146.7 518.6,146.5 520.1,146.4 521.6,146.4 523.1,146.4 524.7,146.5 526.2,144.5 527.7,142.6 529.2,140.6" stroke="#e6e6e6" stroke-width="0.7" fill="none"/><polyline points="485.9,200.4 487.4,198.4 488.9,194.9 490.4,191.1 491.9,187.3 493.4,183.6 495.0,180.0 496.5,176.5 498.0,173.2 499.5,170.0 501.0,167.0 502.5,164.3 504.0,161.7 505.5,159.4 507.0,157.2 508.5,155.4 510.0,153.7 511.6,152.3 513.1,151.0 514.6,150.0 516.1,149.2 517.6,148.5 519.1,147.9 520.6,147.5 522.1,147.2 523.6,147.1 525.1,146.9 526.6,146.9 528.2,144.9 529.7,143.0 531.2,141.0" stroke="#e6e6e6" stroke-width="0.7" fill="none"/><polyline points="488.2,201.0 489.7,199.0 491.2,195.8 492.7,192.2 494.2,188.7 495.7,185.2 497.2,181.9 498.7,178.6 500.2,175.5 501.7,172.5 503.2,169.6 504.7,167.0 506.2,164.5 507.7,162.2 509.2,160.1 510.7,158.2 512.2,156.5 513.7,154.9 515.2,153.6 516.7,152.4 518.1,151.3 519.6,150.3 521.1,149.4 522.6,148.6 524.1,148.0 525.6,147.5 527.1,147.2 528.6,147.0 530.1,145.2 531.6,143.3 533.1,141.4" stroke="#e6e6e6" stroke-width="0.7" fill="none"/><polyline points="490.5,201.7 492.0,199.7 493.5,197.3 495.0,194.8 496.4,192.3 497.9,189.8 499.4,187.4 500.9,185.0 502.4,182.6 503.9,180.3 505.4,178.0 506.8,175.8 508.3,173.7 509.8,170.6 511.3,166.6 512.8,163.8 514.3,162.6 515.8,162.6 517.2,162.0 518.7,160.2 520.2,158.2 521.7,156.2 523.2,153.9 524.7,151.6 526.2,149.6 527.6,148.1 529.1,147.0 530.6,146.2 532.1,144.9 533.6,143.4 535.1,141.7" stroke="#e6e6e6" stroke-width="0.7" fill="none"/><polyline points="492.8,202.3 494.3,200.3 495.7,198.3 497.2,196.3 498.7,194.3 500.2,192.3 501.6,190.3 503.1,188.3 504.6,186.3 506.1,184.1 507.5,181.8 509.0,178.9 510.5,175.4 512.0,171.2 513.4,167.2 514.9,164.4 516.4,163.2 517.9,163.2 519.3,163.2 520.8,162.5 522.3,160.7 523.8,157.8 525.2,154.1 526.7,150.2 528.2,146.8 529.7,144.7 531.1,143.9 532.6,143.7 534.1,143.6 535.6,143.0 537.0,141.7" stroke="#e6e6e6" stroke-width="0.7" fill="none"/><polyline points="495.1,202.9 496.6,200.9 498.0,198.9 499.5,196.9 501.0,194.9 502.4,192.9 503.9,190.9 505.3,188.9 506.8,186.8 508.3,184.7 509.7,182.4 511.2,179.5 512.7,176.0 514.1,171.8 515.6,167.8 517.0,165.0 518.5,163.8 520.0,163.7 521.4,163.6 522.9,162.6 524.4,160.2 525.8,156.1 527.3,150.8 528.7,145.1 530.2,140.5 531.7,138.2 533.1,138.4 534.6,140.0 536.1,141.6 537.5,142.2 539.0,141.7" stroke="#e6e6e6" stroke-width="0.7" fill="none"/><polyline points="497.4,203.6 498.9,201.6 500.3,199.6 501.8,197.5 503.2,195.5 504.7,193.5 506.1,191.5 507.6,189.5 509.0,187.4 510.5,185.3 511.9,183.0 513.4,180.1 514.8,176.6 516.3,172.5 517.7,168.5 519.2,165.7 520.6,164.5 522.1,164.3 523.5,164.1 525.0,162.9 526.4,160.0 527.9,155.1 529.3,148.6 530.8,141.7 532.2,136.2 533.7,133.8 535.1,134.7 536.6,137.6 538.0,140.3 539.5,141.8 540.9,141.8" stroke="#e6e6e6" stroke-width="0.7" fill="none"/><polyline points="499.7,204.2 501.1,202.2 502.6,200.2 504.0,198.2 505.5,196.1 506.9,194.1 508.3,192.1 509.8,190.1 511.2,188.0 512.7,185.9 514.1,183.5 515.5,180.8 517.0,177.3 518.4,173.3 519.9,169.5 521.3,166.7 522.7,165.4 524.2,165.1 525.6,164.8 527.1,163.5 528.5,160.7 529.9,156.0 531.4,149.8 532.8,143.2 534.2,138.0 535.7,135.6 537.1,136.3 538.6,138.8 540.0,141.2 541.4,142.5 542.9,142.3" stroke="#e6e6e6" stroke-width="0.7" fill="none"/><polyline points="502.0,204.9 503.4,202.8 504.9,200.8 506.3,198.8 507.7,196.7 509.1,194.7 510.6,192.7 512.0,190.7 513.4,188.6 514.9,186.5 516.3,184.2 517.7,181.5 519.1,178.2 520.6,174.4 522.0,170.7 523.4,168.0 524.8,166.7 526.3,166.2 527.7,165.8 529.1,164.5 530.6,162.2 532.0,158.5 533.4,153.8 534.8,148.8 536.3,144.7 537.7,142.4 539.1,142.2 540.6,143.1 542.0,143.9 543.4,144.0 544.8,143.1" stroke="#e6e6e6" stroke-width="0.7" fill="none"/><polyline points="504.3,205.5 505.7,203.5 507.1,201.4 508.5,199.4 510.0,197.4 511.4,195.3 512.8,193.3 514.2,191.2 515.6,189.2 517.0,187.1 518.5,184.8 519.9,182.2 521.3,179.2 522.7,175.8 524.1,172.5 525.5,170.0 527.0,168.4 528.4,167.6 529.8,166.9 531.2,165.6 532.6,163.7 534.0,161.0 535.5,157.8 536.9,154.4 538.3,151.4 539.7,149.3 541.1,148.1 542.5,147.3 544.0,146.6 545.4,145.5 546.8,144.0" stroke="#e6e6e6" stroke-width="0.7" fill="none"/><polyline points="506.6,206.2 508.0,204.1 509.4,202.1 510.8,200.0 512.2,198.0 513.6,195.9 515.0,193.9 516.4,191.8 517.8,189.8 519.2,187.7 520.6,185.5 522.1,183.1 523.5,180.4 524.9,177.4 526.3,174.6 527.7,172.2 529.1,170.5 530.5,169.2 531.9,168.1 533.3,166.6 534.7,164.8 536.1,162.6 537.5,160.2 538.9,157.8 540.3,155.4 541.7,153.4 543.1,151.6 544.5,149.9 545.9,148.3 547.3,146.5 548.7,144.7" stroke="#e6e6e6" stroke-width="0.7" fill="none"/><polyline points="508.9,206.8 510.3,204.7 511.7,202.7 513.1,200.6 514.5,198.6 515.9,196.5 517.3,194.5 518.7,192.4 520.0,190.4 521.4,188.3 522.8,186.2 524.2,183.9 525.6,181.5 527.0,178.9 528.4,176.4 529.8,174.1 531.2,172.3 532.6,170.7 534.0,169.2 535.4,167.5 536.8,165.6 538.2,163.5 539.6,161.4 540.9,159.3 542.3,157.2 543.7,155.1 545.1,153.1 546.5,151.1 547.9,149.2 549.3,147.2 550.7,145.2" stroke="#e6e6e6" stroke-width="0.7" fill="none"/><polyline points="508.9,206.8 550.7,145.2" stroke="#d8d8d8" stroke-width="0.8" fill="none"/><line x1="377" y1="141" x2="382.4" y2="180.8" stroke="#d27272" stroke-width="0.9" fill="none"/><line x1="374" y1="141.5" x2="380" y2="140.5" stroke="#d27272" stroke-width="0.9" fill="none"/><line x1="379.5" y1="181" x2="385.5" y2="180.5" stroke="#d27272" stroke-width="0.9" fill="none"/><line x1="394.9" y1="170" x2="450.7" y2="121.6" stroke="#d27272" stroke-width="0.9" fill="none"/><line x1="392" y1="184.9" x2="505.9" y2="217.6" stroke="#d27272" stroke-width="0.9" fill="none"/><line x1="503.5" y1="221" x2="508" y2="214" stroke="#d27272" stroke-width="0.9" fill="none"/><line x1="389" y1="188" x2="394" y2="181" stroke="#d27272" stroke-width="0.9" fill="none"/><line x1="446" y1="120" x2="455" y2="122" stroke="#d27272" stroke-width="0.9" fill="none"/><text x="0" y="0" fill="#d27272" font-family="Liberation Sans" font-size="6.2" transform="translate(376,168) rotate(-82)">40.5</text><text x="0" y="0" fill="#d27272" font-family="Liberation Sans" font-size="6.2" transform="translate(419,152) rotate(-41)">50.0</text><text x="0" y="0" fill="#d27272" font-family="Liberation Sans" font-size="6.2" transform="translate(437,204) rotate(16)">150.0</text><text x="0" y="0" fill="#d27272" font-family="Liberation Sans" font-size="6.2" transform="translate(500,233) rotate(-76)">53.0</text><text x="0" y="0" fill="#d27272" font-family="Liberation Sans" font-size="6.2" transform="translate(381,197) rotate(-40)">-52.0</text><text x="0" y="0" fill="#d27272" font-family="Liberation Sans" font-size="6.2" transform="translate(366,187) rotate(-40)">-36.5</text><text x="0" y="0" fill="#d27272" font-family="Liberation Sans" font-size="5" transform="translate(437,121) rotate(-14)">66.7</text><line x1="458.6" y1="90.5" x2="458.6" y2="125" stroke="#5a7272" stroke-width="0.8"/><line x1="480.3" y1="106.5" x2="480.3" y2="130.3" stroke="#2a2ae0" stroke-width="1"/><path d="M495.5,116.5 L497,114.9 L494.5,115.3" stroke="#d03030" stroke-width="0.8" fill="none"/><text x="478" y="101.5" fill="#3030e0" font-family="Liberation Sans" font-size="7">Z</text><line x1="480.3" y1="130.3" x2="497" y2="114.9" stroke="#d03030" stroke-width="0.9"/><line x1="480.3" y1="130.3" x2="513.3" y2="139.3" stroke="#30d030" stroke-width="1"/><defs><linearGradient id="cg718" x1="0" x2="1"><stop offset="0" stop-color="#8a8a8a"/><stop offset="0.45" stop-color="#d8d8d8"/><stop offset="1" stop-color="#b0b0b0"/></linearGradient></defs><path d="M356.7,121 L369,140 L374.4,121 Z" fill="url(#cg718)"/><ellipse cx="365.5" cy="120.8" rx="8.9" ry="2.6" fill="#d0d0d0"/><polyline points="322,134 325.1,146.7 345.2,133.7 368.8,139.9" stroke="#e8d820" stroke-width="1.3" fill="none"/><text x="360" y="139" fill="#d27272" font-family="Liberation Sans" font-size="5">10</text><polygon points="326.50,134.75 324.21,135.42 324.45,137.80 322.36,136.65 320.85,138.50 320.18,136.21 317.80,136.45 318.95,134.36 317.10,132.85 319.39,132.18 319.15,129.80 321.24,130.95 322.75,129.10 323.42,131.39 325.80,131.15 324.65,133.24" fill="#22e4f4"/><circle cx="321.8" cy="133.8" r="1.6" fill="#0a7a90"/><circle cx="321.8" cy="133.2" r="0.9" fill="#e8e020"/></svg>
<div class="a bR" style="left:934.40px;top:33.20px;width:25.40px;height:20.20px;border-color:#22cc22;color:#22dd22;font-size:6.4px;"><div class="bt">P</div></div>
<div class="a bR" style="left:934.40px;top:61.27px;width:25.40px;height:20.20px;font-size:6.4px;"><div class="bt">X</div></div>
<div class="a bR" style="left:934.40px;top:89.34px;width:25.40px;height:20.20px;font-size:6.4px;"><div class="bt">Y</div></div>
<div class="a bR" style="left:934.40px;top:117.41px;width:25.40px;height:20.20px;font-size:6.4px;"><div class="bt">Z</div></div>
<div class="a bR" style="left:934.40px;top:145.48px;width:25.40px;height:20.20px;border-color:#22cc22;color:#22dd22;font-size:6.4px;"><div class="bt">D</div></div>
<div class="a bR" style="left:934.40px;top:173.55px;width:25.40px;height:20.20px;font-size:6.4px;"><div class="bt">+</div></div>
<div class="a bR" style="left:934.40px;top:201.62px;width:25.40px;height:20.20px;font-size:6.4px;"><div class="bt">-</div></div>
<div class="a bR" style="left:934.40px;top:229.69px;width:25.40px;height:20.20px;font-size:6.4px;"><div class="bt">C</div></div>
<div class="a bR" style="left:726.50px;top:262.20px;width:91.00px;height:24.40px;font-size:6.3px;border-color:#3a4a5a;"><div class="bt"></div></div>
<div class="a t " style="left:596.20px;top:259.30px;width:300px;height:30px;justify-content:center;text-align:center;font-size:6.9px;line-height:8.2px;color:#f0f0f0;font-weight:normal;">CYCLE<br>START</div>
<div class="a boxR" style="left:769.40px;top:268.40px;width:29.70px;height:11.90px;line-height:10px;font-size:7px;">1</div>
<div class="led" style="left:803.70px;top:269.90px;width:7.80px;height:7.80px;background:radial-gradient(circle at 45% 40%,#e4e4e4 0%,#9a9a9a 22%,#404040 65%,#202020 100%);border:1px solid #1aa01a;"></div>
<div class="a bR" style="left:725.00px;top:289.70px;width:44.60px;height:23.70px;color:#8c9096;font-size:6.6px;font-weight:normal;"><div class="bt">PAUSE</div></div>
<div class="a bR" style="left:774.40px;top:289.70px;width:44.30px;height:23.70px;font-size:6.6px;"><div class="bt">STOP</div></div>
<div class="a bR" style="left:725.00px;top:317.70px;width:44.60px;height:23.70px;border-color:#22bb22;color:#8c9096;font-size:6.6px;font-weight:normal;"><div class="bt">OPT<br>BLOCK</div></div>
<div class="a bR" style="left:774.40px;top:317.70px;width:44.30px;height:23.70px;color:#8c9096;font-size:6.6px;"><div class="bt">STEP</div></div>
<div class="a bR" style="left:725.00px;top:345.70px;width:44.60px;height:23.70px;border-color:#22bb22;color:#8c9096;font-size:6.6px;font-weight:normal;"><div class="bt">OPT<br>STOP</div></div>
<div class="a bR" style="left:774.40px;top:345.70px;width:44.30px;height:23.70px;font-size:6.6px;"><div class="bt">RELOAD</div></div>
<div class="a bR" style="left:725.00px;top:373.70px;width:44.60px;height:23.70px;font-size:6.6px;font-weight:normal;"><div class="bt">MIST<br>OFF</div></div>
<div class="a bR" style="left:774.40px;top:373.70px;width:44.30px;height:23.70px;font-size:6.6px;"><div class="bt">FLOOD<br>OFF</div></div>
<div class="a " style="left:723.10px;top:402.10px;width:98.90px;height:10.90px;will-change:transform;background:#fbfbfb;border:1px solid #aaa;border-radius:3px;font-size:6.55px;color:#9a9a9a;text-align:center;line-height:9.5px;">Progress</div>
<div class="a t lblR" style="left:690.30px;top:251.20px;width:300px;height:30px;justify-content:center;text-align:center;">UNITS</div>
<div class="a t lblR" style="left:724.30px;top:251.20px;width:300px;height:30px;justify-content:center;text-align:center;">STATE</div>
<div class="a t lblR" style="left:759.90px;top:251.20px;width:300px;height:30px;justify-content:center;text-align:center;">EOFFSET</div>
<div class="a boxR" style="left:827.90px;top:272.80px;width:24.70px;height:11.80px;line-height:10px;">MM</div>
<div class="a boxR" style="left:856.00px;top:272.80px;width:34.70px;height:11.80px;line-height:10px;">Stopped</div>
<div class="a boxR" style="left:894.70px;top:272.80px;width:30.00px;height:11.80px;line-height:10px;">0.000</div>
<div class="a t lblR" style="left:690.30px;top:276.60px;width:300px;height:30px;justify-content:center;text-align:center;">TOOL</div>
<div class="a t lblR" style="left:724.30px;top:276.60px;width:300px;height:30px;justify-content:center;text-align:center;">DIA</div>
<div class="a t lblR" style="left:759.90px;top:276.60px;width:300px;height:30px;justify-content:center;text-align:center;">SCS</div>
<div class="a boxR" style="left:827.90px;top:299.00px;width:24.70px;height:11.70px;line-height:10px;">0</div>
<div class="a boxR" style="left:856.50px;top:299.00px;width:34.50px;height:11.70px;line-height:10px;">0</div>
<div class="a boxR" style="left:895.00px;top:299.00px;width:30.00px;height:11.70px;line-height:10px;">0</div>
<div class="a boxR" style="left:827.30px;top:318.70px;width:98.40px;height:13.90px;line-height:14px;font-size:7.2px;">No Tool</div>
<div class="a t lblR" style="left:693.10px;top:333.60px;width:300px;height:30px;justify-content:center;text-align:center;">OPT BLK</div>
<div class="a t lblR" style="left:742.70px;top:333.60px;width:300px;height:30px;justify-content:center;text-align:center;">MIST</div>
<div class="led" style="left:863.70px;top:344.70px;width:7.80px;height:7.80px;background:radial-gradient(circle at 42% 38%,#d8ffd0 0%,#50f850 30%,#20c020 75%,#109010 100%);"></div>
<div class="led" style="left:913.10px;top:344.90px;width:7.40px;height:7.40px;background:radial-gradient(circle at 45% 40%,#e4e4e4 0%,#9a9a9a 22%,#404040 65%,#202020 100%);border:1px solid #1aa01a;"></div>
<div class="a t lblR" style="left:693.10px;top:350.30px;width:300px;height:30px;justify-content:center;text-align:center;">OPT STP</div>
<div class="a t lblR" style="left:742.70px;top:350.30px;width:300px;height:30px;justify-content:center;text-align:center;">FLOOD</div>
<div class="led" style="left:863.70px;top:361.40px;width:7.80px;height:7.80px;background:radial-gradient(circle at 42% 38%,#d8ffd0 0%,#50f850 30%,#20c020 75%,#109010 100%);"></div>
<div class="led" style="left:913.10px;top:361.60px;width:7.40px;height:7.40px;background:radial-gradient(circle at 45% 40%,#e4e4e4 0%,#9a9a9a 22%,#404040 65%,#202020 100%);border:1px solid #1aa01a;"></div>
<div class="a t lblR" style="left:693.10px;top:367.10px;width:300px;height:30px;justify-content:center;text-align:center;">IDLE</div>
<div class="a t lblR" style="left:742.70px;top:367.10px;width:300px;height:30px;justify-content:center;text-align:center;">PAUSED</div>
<div class="led" style="left:863.70px;top:378.20px;width:7.80px;height:7.80px;background:radial-gradient(circle at 42% 38%,#ffd0d0 0%,#ff4040 35%,#d01010 80%,#900808 100%);"></div>
<div class="led" style="left:913.10px;top:378.40px;width:7.40px;height:7.40px;background:radial-gradient(circle at 45% 40%,#e4e4e4 0%,#9a9a9a 22%,#404040 65%,#202020 100%);border:1px solid #a8a020;"></div>
<div class="a t lblR" style="left:701.50px;top:382.40px;width:300px;height:30px;justify-content:center;text-align:center;">RUN TIME</div>
<div class="a boxR" style="left:829.50px;top:403.40px;width:44.60px;height:12.30px;line-height:10.5px;font-size:7.5px;">00:00:00</div>
<div class="a bR" style="left:879.30px;top:391.50px;width:44.40px;height:24.50px;color:#8c9096;font-size:6.6px;font-weight:normal;"><div class="bt">PAUSE<br>SPINDLE</div></div>
<div class="a bR" style="left:936.30px;top:267.10px;width:31.40px;height:24.50px;font-size:6.3px;"><div class="bt">WCS</div><svg class="arr" width="5" height="4" viewBox="0 0 5 4"><path d="M0.3,0.5 L4.3,3.3 M2.4,3.4 L4.5,3.4 L4.2,1.8" stroke="#9a9a9a" stroke-width="0.8" fill="none"/></svg></div>
<div class="a bR" style="left:970.30px;top:267.10px;width:32.40px;height:24.50px;border-color:#22cc22;color:#22dd22;font-size:6.3px;"><div class="bt">ABS</div></div>
<div class="a bR" style="left:1005.40px;top:267.10px;width:31.10px;height:24.50px;font-size:6.3px;"><div class="bt">G54</div></div>
<div class="a bR" style="left:1040.00px;top:267.10px;width:31.30px;height:24.50px;font-size:6.3px;"><div class="bt">DTG</div></div>
<div class="a bR" style="left:1074.40px;top:267.10px;width:66.20px;height:24.50px;font-size:6.3px;border-color:#30343a;"><div class="bt" style="right:auto;width:43.0px;">ALL<br>HOMED</div></div>
<div class="led" style="left:1125.40px;top:275.50px;width:7.20px;height:7.20px;background:radial-gradient(circle at 42% 38%,#d8ffd0 0%,#50f850 30%,#20c020 75%,#109010 100%);"></div>
<div class="a bR" style="left:936.30px;top:298.60px;width:31.40px;height:24.50px;font-size:6.3px;border-color:#30343a;"><div class="bt"></div></div>
<div class="a t " style="left:802.00px;top:296.15px;width:300px;height:30px;justify-content:center;text-align:center;font-size:14.5px;color:#22dd22;">X</div>
<div class="a " style="left:970.30px;top:298.00px;width:66.60px;height:25.50px;background:#000;"></div>
<div class="a t " style="left:732.30px;top:296.25px;width:300px;height:30px;justify-content:flex-end;text-align:right;font-size:15.2px;color:#22e622;-webkit-text-stroke:0.15px #22e622;">20.000</div>
<div class="a bR" style="left:1040.00px;top:298.60px;width:31.30px;height:24.50px;font-size:6.3px;"><div class="bt">ZERO</div></div>
<div class="a bR" style="left:1074.40px;top:298.60px;width:31.40px;height:24.50px;font-size:6.3px;"><div class="bt">REFX</div><svg class="arr" width="5" height="4" viewBox="0 0 5 4"><path d="M0.3,0.5 L4.3,3.3 M2.4,3.4 L4.5,3.4 L4.2,1.8" stroke="#9a9a9a" stroke-width="0.8" fill="none"/></svg></div>
<div class="a bR" style="left:1109.00px;top:298.60px;width:31.60px;height:24.50px;font-size:6.3px;"><div class="bt">HOME</div></div>
<div class="a bR" style="left:936.30px;top:330.10px;width:31.40px;height:24.50px;font-size:6.3px;border-color:#30343a;"><div class="bt"></div></div>
<div class="a t " style="left:802.00px;top:327.65px;width:300px;height:30px;justify-content:center;text-align:center;font-size:14.5px;color:#22dd22;">Y</div>
<div class="a " style="left:970.30px;top:329.50px;width:66.60px;height:25.50px;background:#000;"></div>
<div class="a t " style="left:732.30px;top:327.75px;width:300px;height:30px;justify-content:flex-end;text-align:right;font-size:15.2px;color:#22e622;-webkit-text-stroke:0.15px #22e622;">20.000</div>
<div class="a bR" style="left:1040.00px;top:330.10px;width:31.30px;height:24.50px;font-size:6.3px;"><div class="bt">ZERO</div></div>
<div class="a bR" style="left:1074.40px;top:330.10px;width:31.40px;height:24.50px;font-size:6.3px;"><div class="bt">REFY</div><svg class="arr" width="5" height="4" viewBox="0 0 5 4"><path d="M0.3,0.5 L4.3,3.3 M2.4,3.4 L4.5,3.4 L4.2,1.8" stroke="#9a9a9a" stroke-width="0.8" fill="none"/></svg></div>
<div class="a bR" style="left:1109.00px;top:330.10px;width:31.60px;height:24.50px;font-size:6.3px;"><div class="bt">HOME</div></div>
<div class="a bR" style="left:936.30px;top:361.60px;width:31.40px;height:24.50px;font-size:6.3px;border-color:#30343a;"><div class="bt"></div></div>
<div class="a t " style="left:802.00px;top:359.15px;width:300px;height:30px;justify-content:center;text-align:center;font-size:14.5px;color:#22dd22;">Z</div>
<div class="a " style="left:970.30px;top:361.00px;width:66.60px;height:25.50px;background:#000;"></div>
<div class="a t " style="left:732.30px;top:359.25px;width:300px;height:30px;justify-content:flex-end;text-align:right;font-size:15.2px;color:#22e622;-webkit-text-stroke:0.15px #22e622;">-10.000</div>
<div class="a bR" style="left:1040.00px;top:361.60px;width:31.30px;height:24.50px;font-size:6.3px;"><div class="bt">ZERO</div></div>
<div class="a bR" style="left:1074.40px;top:361.60px;width:31.40px;height:24.50px;font-size:6.3px;"><div class="bt">REFZ</div><svg class="arr" width="5" height="4" viewBox="0 0 5 4"><path d="M0.3,0.5 L4.3,3.3 M2.4,3.4 L4.5,3.4 L4.2,1.8" stroke="#9a9a9a" stroke-width="0.8" fill="none"/></svg></div>
<div class="a bR" style="left:1109.00px;top:361.60px;width:31.60px;height:24.50px;font-size:6.3px;"><div class="bt">HOME</div></div>
<div class="a " style="left:933.30px;top:395.50px;width:210.20px;height:10.00px;font-size:6.0px;line-height:8.5px;padding-left:1px;background:#000;color:#eee;border:1px solid #666;border-radius:3px;font-size:6.0px;line-height:8.5px;">G8 G17 G21 G40 G49 G54 G64 G80 G90 G91.1 G94 G97 G99</div>
<div class="a " style="left:933.30px;top:407.60px;width:210.20px;height:9.90px;font-size:6.0px;line-height:8.5px;padding-left:1px;background:#000;color:#eee;border:1px solid #666;border-radius:3px;font-size:6.0px;line-height:8.5px;">M0 M5 M9 M48 M53</div>
<div class="a t lblR" style="left:1051.30px;top:264.30px;width:300px;height:30px;justify-content:center;text-align:center;font-size:6.5px;font-weight:normal;">MAX VELOCITY OVERRIDE</div>
<div class="a bR" style="left:1150.30px;top:287.20px;width:19.40px;height:11.40px;font-size:6.8px;font-weight:normal;"><div class="bt">50</div></div>
<div class="a bR" style="left:1233.30px;top:287.20px;width:19.40px;height:11.40px;font-size:6.8px;font-weight:normal;"><div class="bt">100</div></div>
<div class="a " style="left:1172.60px;top:290.30px;width:57.80px;height:5.40px;background:#fafafa;"></div>
<div class="a " style="left:1172.60px;top:290.30px;width:52.80px;height:5.40px;background:linear-gradient(90deg,#b4b4ff,#5a5af6);"></div>
<div class="a " style="left:1223.40px;top:289.20px;width:7.00px;height:8.10px;background:linear-gradient(180deg,#f4f4f4,#c4c4c4);border:1px solid #6a6a6a;border-radius:1px;"></div>
<div class="a boxR" style="left:1257.30px;top:274.80px;width:30.00px;height:12.00px;line-height:10px;">100 %</div>
<div class="a boxR" style="left:1258.00px;top:289.00px;width:29.30px;height:11.60px;line-height:10px;">3600</div>
<div class="a t lblR" style="left:1051.30px;top:303.40px;width:300px;height:30px;justify-content:center;text-align:center;font-size:6.5px;font-weight:normal;">RAPID OVERRIDE</div>
<div class="a bR" style="left:1150.30px;top:326.30px;width:19.40px;height:11.40px;font-size:6.8px;font-weight:normal;"><div class="bt">50</div></div>
<div class="a bR" style="left:1233.30px;top:326.30px;width:19.40px;height:11.40px;font-size:6.8px;font-weight:normal;"><div class="bt">100</div></div>
<div class="a " style="left:1172.60px;top:329.40px;width:57.80px;height:5.40px;background:#fafafa;"></div>
<div class="a " style="left:1172.60px;top:329.40px;width:52.80px;height:5.40px;background:linear-gradient(90deg,#b4b4ff,#5a5af6);"></div>
<div class="a " style="left:1223.40px;top:328.30px;width:7.00px;height:8.10px;background:linear-gradient(180deg,#f4f4f4,#c4c4c4);border:1px solid #6a6a6a;border-radius:1px;"></div>
<div class="a boxR" style="left:1257.30px;top:313.90px;width:30.00px;height:12.00px;line-height:10px;">100 %</div>
<div class="a boxR" style="left:1258.00px;top:328.10px;width:29.30px;height:11.60px;line-height:10px;">3600</div>
<div class="a t lblR" style="left:1051.30px;top:342.50px;width:300px;height:30px;justify-content:center;text-align:center;font-size:6.5px;font-weight:normal;">FEEDRATE OVERRIDE</div>
<div class="a bR" style="left:1150.30px;top:365.40px;width:19.40px;height:11.40px;font-size:6.8px;font-weight:normal;"><div class="bt">50</div></div>
<div class="a bR" style="left:1233.30px;top:365.40px;width:19.40px;height:11.40px;font-size:6.8px;font-weight:normal;"><div class="bt">100</div></div>
<div class="a " style="left:1172.60px;top:368.50px;width:57.80px;height:5.40px;background:#fafafa;"></div>
<div class="a " style="left:1172.60px;top:368.50px;width:45.08px;height:5.40px;background:linear-gradient(90deg,#b4b4ff,#5a5af6);"></div>
<div class="a " style="left:1215.68px;top:367.40px;width:7.00px;height:8.10px;background:linear-gradient(180deg,#f4f4f4,#c4c4c4);border:1px solid #6a6a6a;border-radius:1px;"></div>
<div class="a boxR" style="left:1257.30px;top:353.00px;width:30.00px;height:12.00px;line-height:10px;">100 %</div>
<div class="a boxR" style="left:1258.00px;top:367.20px;width:29.30px;height:11.60px;line-height:10px;">0</div>
<div class="a t lblR" style="left:1051.30px;top:381.60px;width:300px;height:30px;justify-content:center;text-align:center;font-size:6.5px;font-weight:normal;">SPINDLE OVERRIDE</div>
<div class="a bR" style="left:1150.30px;top:404.50px;width:19.40px;height:11.40px;font-size:6.8px;font-weight:normal;"><div class="bt">50</div></div>
<div class="a bR" style="left:1233.30px;top:404.50px;width:19.40px;height:11.40px;font-size:6.8px;font-weight:normal;"><div class="bt">100</div></div>
<div class="a " style="left:1172.60px;top:407.60px;width:57.80px;height:5.40px;background:#fafafa;"></div>
<div class="a " style="left:1172.60px;top:407.60px;width:27.70px;height:5.40px;background:linear-gradient(90deg,#b4b4ff,#5a5af6);"></div>
<div class="a " style="left:1198.30px;top:406.50px;width:7.00px;height:8.10px;background:linear-gradient(180deg,#f4f4f4,#c4c4c4);border:1px solid #6a6a6a;border-radius:1px;"></div>
<div class="a boxR" style="left:1257.30px;top:392.10px;width:30.00px;height:12.00px;line-height:10px;">100 %</div>
<div class="a boxR" style="left:1258.00px;top:406.30px;width:29.30px;height:11.60px;line-height:10px;">0</div>
<div class="a bR" style="left:1294.30px;top:263.30px;width:45.50px;height:25.10px;font-size:6.3px;"><div class="bt">MAN</div><div class="sled" style="background:radial-gradient(circle at 50% 50%,#1a1a1a 0%,#2a2a2a 45%,#8a8a8a 70%,#555 100%)"></div></div>
<div class="a bR" style="left:1342.30px;top:263.30px;width:45.50px;height:25.10px;font-size:6.3px;"><div class="bt">MDI</div><div class="sled" style="background:radial-gradient(circle at 50% 50%,#1a1a1a 0%,#2a2a2a 45%,#8a8a8a 70%,#555 100%)"></div></div>
<div class="a bR" style="left:1390.40px;top:263.30px;width:45.50px;height:25.10px;border-color:#22cc22;color:#22dd22;font-size:6.3px;"><div class="bt">AUTO</div><div class="sled" style="background:radial-gradient(circle at 40% 40%,#e0ffe0,#38f038 50%,#18a018)"></div></div>
<div class="a t lblR" style="left:1214.10px;top:287.10px;width:300px;height:30px;justify-content:center;text-align:center;">SPINDLE</div>
<div class="a bR" style="left:1294.30px;top:308.40px;width:44.10px;height:19.20px;color:#8c9096;font-size:6.3px;font-weight:normal;"><div class="bt">REV</div><div class="sled" style="background:radial-gradient(circle at 50% 50%,#1a1a1a 0%,#2a2a2a 45%,#8a8a8a 70%,#555 100%)"></div></div>
<div class="a bR" style="left:1342.70px;top:308.40px;width:43.80px;height:19.20px;color:#8c9096;font-size:6.3px;font-weight:normal;"><div class="bt">STOP</div><div class="sled" style="background:radial-gradient(circle at 40% 40%,#ffd0d0,#ff2a2a 50%,#b01010)"></div></div>
<div class="a bR" style="left:1390.80px;top:308.40px;width:43.90px;height:19.20px;color:#8c9096;font-size:6.3px;font-weight:normal;"><div class="bt">FWD</div><div class="sled" style="background:radial-gradient(circle at 50% 50%,#1a1a1a 0%,#2a2a2a 45%,#8a8a8a 70%,#555 100%)"></div></div>
<div class="a t lblR" style="left:1160.70px;top:321.10px;width:300px;height:30px;justify-content:center;text-align:center;">RPM</div>
<div class="a t lblR" style="left:1194.90px;top:321.10px;width:300px;height:30px;justify-content:center;text-align:center;">PWR</div>
<div class="a t lblR" style="left:1230.30px;top:321.10px;width:300px;height:30px;justify-content:center;text-align:center;">AMPS</div>
<div class="a t lblR" style="left:1266.10px;top:321.10px;width:300px;height:30px;justify-content:center;text-align:center;">FAULT</div>
<div class="a boxR" style="left:1297.70px;top:342.60px;width:27.20px;height:11.20px;line-height:9.5px;">0</div>
<div class="a boxR" style="left:1332.60px;top:342.60px;width:28.10px;height:11.20px;line-height:9.5px;">0.0</div>
<div class="a boxR" style="left:1368.40px;top:342.60px;width:28.30px;height:11.20px;line-height:9.5px;">0.0</div>
<div class="a boxR" style="left:1404.40px;top:342.60px;width:27.70px;height:11.20px;line-height:9.5px;">0x0</div>
<div class="a t lblR" style="left:1179.70px;top:353.70px;width:300px;height:30px;justify-content:center;text-align:center;font-size:6.5px;">HOME SWITCHES</div>
<div class="a t lblR" style="left:1229.70px;top:354.60px;width:300px;height:30px;justify-content:center;text-align:center;">PROBE</div>
<div class="a t lblR" style="left:1268.80px;top:354.60px;width:300px;height:30px;justify-content:center;text-align:center;">LIMIT</div>
<div class="a t lblR" style="left:1155.40px;top:365.30px;width:300px;height:30px;justify-content:center;text-align:center;">X</div>
<div class="led" style="left:1309.80px;top:376.20px;width:7.20px;height:7.20px;background:radial-gradient(circle at 45% 40%,#e4e4e4 0%,#9a9a9a 22%,#404040 65%,#202020 100%);border:1px solid #1aa01a;"></div>
<div class="a t lblR" style="left:1177.80px;top:365.30px;width:300px;height:30px;justify-content:center;text-align:center;">Y</div>
<div class="led" style="left:1331.90px;top:376.20px;width:7.20px;height:7.20px;background:radial-gradient(circle at 45% 40%,#e4e4e4 0%,#9a9a9a 22%,#404040 65%,#202020 100%);border:1px solid #1aa01a;"></div>
<div class="a t lblR" style="left:1199.40px;top:365.30px;width:300px;height:30px;justify-content:center;text-align:center;">Z</div>
<div class="led" style="left:1353.80px;top:376.20px;width:7.20px;height:7.20px;background:radial-gradient(circle at 45% 40%,#e4e4e4 0%,#9a9a9a 22%,#404040 65%,#202020 100%);border:1px solid #1aa01a;"></div>
<div class="led" style="left:1379.80px;top:377.70px;width:7.20px;height:7.20px;background:radial-gradient(circle at 45% 40%,#e4e4e4 0%,#9a9a9a 22%,#404040 65%,#202020 100%);border:1px solid #1aa01a;"></div>
<div class="led" style="left:1414.80px;top:377.70px;width:7.20px;height:7.20px;background:radial-gradient(circle at 45% 40%,#e4e4e4 0%,#9a9a9a 22%,#404040 65%,#202020 100%);border:1px solid #b01818;"></div>
<div class="a " style="left:1293.60px;top:397.00px;width:106.80px;height:18.00px;will-change:transform;font-size:9.35px;line-height:17px;text-align:center;background:#000;color:#f4f4f4;border:1px solid #555;border-radius:3px;">07:29:33 PM</div>
<div class="a bR" style="left:1401.10px;top:396.40px;width:35.50px;height:19.80px;font-size:6.3px;"><div class="bt">EXIT</div></div>
<div class="a " style="left:1428.20px;top:421.10px;width:9.90px;height:8.90px;background:linear-gradient(160deg,#8ad860,#48a820 60%,#3a9a18);border-left:1px solid #d8d8d8;"></div>
<svg class="a" style="left:1428.20px;top:421.1px;" width="10" height="9" viewBox="0 0 10 9"><path d="M2.2,4.8 C1.2,3.6 2.2,1.8 3.6,2.2 C4.2,0.9 6.4,0.9 7,2.2 C8.6,2.0 9.2,3.8 8.4,4.8 C9.0,6.2 7.6,7.6 6.4,7.0 C5.6,8.0 4.0,8.0 3.4,7.0 C2.0,7.4 1.4,5.8 2.2,4.8 Z" fill="#f4f4f4"/><circle cx="5.4" cy="2.6" r="0.7" fill="#58b030"/><path d="M5.3,3.8 L4.9,6.6" stroke="#58b030" stroke-width="1.1"/></svg>
</body></html>
